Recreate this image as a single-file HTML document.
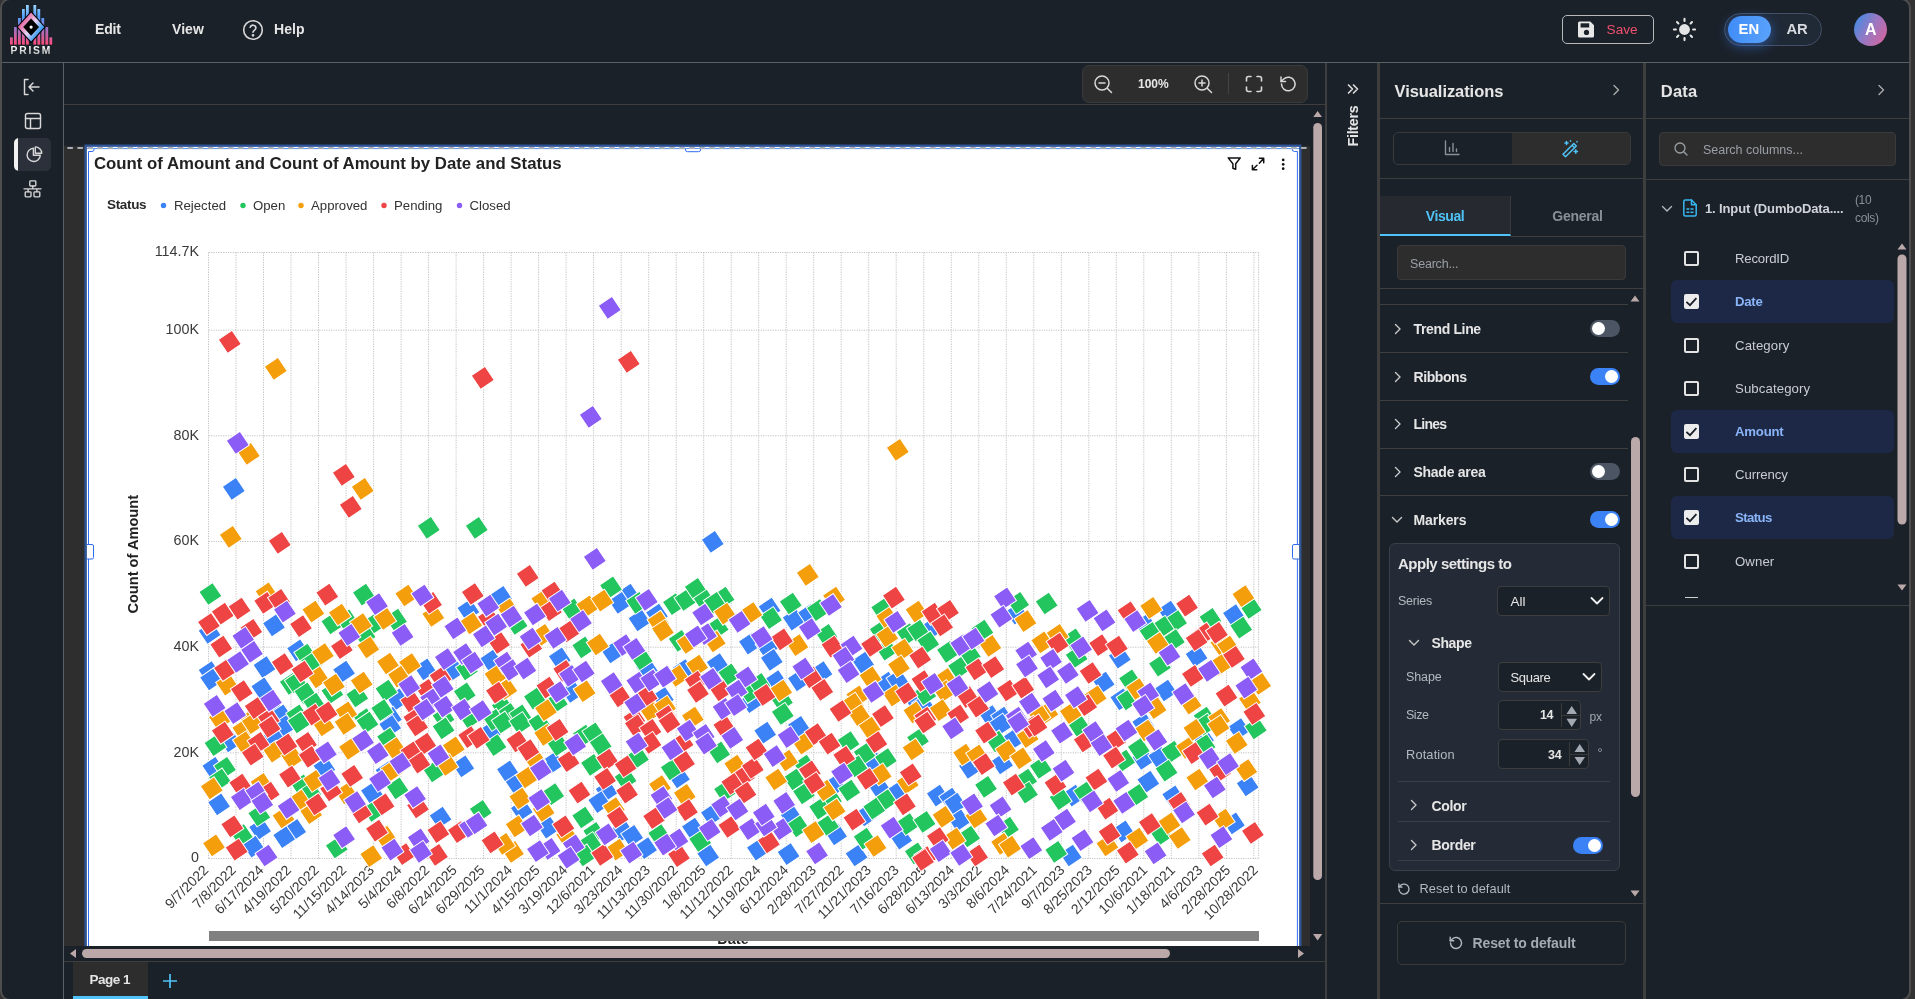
<!DOCTYPE html>
<html lang="en"><head><meta charset="utf-8"><title>PRISM</title>
<style>
*{box-sizing:border-box;margin:0;padding:0}
html,body{width:1915px;height:999px;overflow:hidden;background:#333;font-family:"Liberation Sans",sans-serif;color:#e6e6e6}
.a{position:absolute}
.win{position:absolute;left:0;top:-2px;width:1911px;height:1003px;background:#1b2129;border:2px solid #4e4e4e;border-radius:10px;overflow:hidden}
/* everything inside .root uses page coordinates */
.root{will-change:transform;position:absolute;left:-2px;top:0;width:1915px;height:999px}
.hl{position:absolute;height:1px;background:#3e3e3e}
.vl{position:absolute;width:1px;background:#3e3e3e}
.t{position:absolute;white-space:nowrap;line-height:1}
.b{font-weight:bold}
svg{position:absolute;overflow:visible}
.ic{fill:none;stroke:#d8d8d8;stroke-width:1.6;stroke-linecap:round;stroke-linejoin:round}
.tog{position:absolute;width:30px;height:17px;border-radius:9px;background:#4b5563}
.tog i{position:absolute;left:2px;top:2px;width:13px;height:13px;border-radius:50%;background:#fff}
.tog.on{background:#3b82f6}
.tog.on i{left:15px}
.cb{position:absolute;width:15px;height:15px;border:2px solid #e4e4e4;border-radius:2px}
.cb.on{background:#ececec;border-color:#ececec}
.sel{position:absolute;background:#1b2129;border:1px solid #3d3d3d;border-radius:4px}
.row{position:absolute;left:1671px;width:223px;height:43px;border-radius:6px;background:#1c2846}

</style></head>
<body>
<div class="win"><div class="root">

<!-- ============ top bar ============ -->
<div class="hl" style="left:0;top:62px;width:1915px;background:#5b5f66"></div>
<svg style="left:8px;top:3px" width="48" height="54" viewBox="8 3 48 54">
<defs>
<linearGradient id="lgb" x1="0" y1="5" x2="0" y2="45" gradientUnits="userSpaceOnUse"><stop offset="0" stop-color="#9ad4ff"/><stop offset=".3" stop-color="#4f9dff"/><stop offset=".6" stop-color="#a071c4"/><stop offset="1" stop-color="#ff4b78"/></linearGradient>
<linearGradient id="lgd" x1="18" y1="18" x2="44" y2="36" gradientUnits="userSpaceOnUse"><stop offset="0" stop-color="#e85c9a"/><stop offset=".22" stop-color="#e672ab"/><stop offset=".52" stop-color="#e6d6f6"/><stop offset=".78" stop-color="#4aa3f5"/><stop offset="1" stop-color="#3b9af3"/></linearGradient>
<linearGradient id="lgt" x1="0" y1="47" x2="0" y2="54" gradientUnits="userSpaceOnUse"><stop offset="0" stop-color="#fff"/><stop offset="1" stop-color="#bdbdbd"/></linearGradient>
</defs>
<g fill="url(#lgb)">
<rect x="10" y="37.3" width="2.8" height="7.3"/><rect x="14" y="27" width="2.8" height="17.6"/><rect x="18" y="18" width="2.8" height="26.6"/><rect x="22" y="9" width="2.8" height="35.6"/><rect x="26" y="5" width="2.8" height="39.6"/>
<rect x="33.4" y="5" width="2.8" height="39.6"/><rect x="37.4" y="9" width="2.8" height="35.6"/><rect x="41.4" y="18" width="2.8" height="26.6"/><rect x="45.4" y="27" width="2.8" height="17.6"/><rect x="49.4" y="37.3" width="2.8" height="7.3"/>
</g>
<path d="M31.1 11 L45.7 27.1 L31.1 43.2 L16.5 27.1 Z" fill="#000"/>
<path d="M31.1 12.6 L44.3 27.1 L31.1 41.6 L17.9 27.1 Z" fill="url(#lgd)"/>
<path d="M31.1 18.4 L39 27.1 L31.1 35.8 L23.2 27.1 Z" fill="#000"/>
<circle cx="31.1" cy="27.1" r="1.6" fill="#fff"/>
<text x="31.3" y="53.8" text-anchor="middle" font-family="Liberation Sans, sans-serif" font-size="10.3" font-weight="bold" letter-spacing="1.75" fill="url(#lgt)">PRISM</text>
</svg>
<div class="t b" style="left:95px;top:22px;font-size:14px;letter-spacing:-0.14px">Edit</div>
<div class="t b" style="left:172px;top:22px;font-size:14px;letter-spacing:0.06px">View</div>
<svg style="stroke-width:1.6;left:241px;top:18px" width="24" height="24" viewBox="0 0 24 24" class="ic"><circle cx="12" cy="12" r="9.3"/><path d="M9.2 9.3a2.9 2.9 0 0 1 5.7 .8c0 2-2.9 2.6-2.9 4.1"/><circle cx="12" cy="17.3" r=".6" fill="#d8d8d8"/></svg>
<div class="t b" style="left:274px;top:22px;font-size:14px;letter-spacing:0.06px">Help</div>

<!-- save -->
<div class="a" style="left:1562px;top:15px;width:92px;height:29px;border:1px solid #b9b9b9;border-radius:5px"></div>
<svg style="left:1577px;top:20px" width="19" height="19" viewBox="0 0 19 19"><path d="M2.5 1.5h10.8l3.7 3.7v10.8a1.5 1.5 0 0 1-1.500 1.500h-13a1.5 1.5 0 0 1-1.500-1.500v-13a1.500 1.500 0 0 1 1.500-1.500z" fill="#e8e8e8"/><rect x="3.6" y="3.300" width="8.6" height="4.200" fill="#1b2129"/><circle cx="9.500" cy="12.400" r="2.600" fill="#1b2129"/></svg>
<div class="t" style="left:1606.6px;top:23.3px;font-size:13.6px;color:#f0506e;letter-spacing:-0.02px">Save</div>
<!-- sun -->
<svg style="left:1672px;top:17px" width="25" height="25" viewBox="-12.500 -12.500 25 25"><circle r="5.400" fill="#e4e4e4"/><g stroke="#e4e4e4" stroke-width="2.100" stroke-linecap="round"><path d="M0-8.600V-10.600M0 8.600V10.600M-8.600 0H-10.600M8.600 0H10.600M-6.100-6.100L-7.500-7.500M6.100-6.100L7.500-7.500M-6.100 6.100L-7.500 7.500M6.100 6.100L7.500 7.500"/></g></svg>
<!-- language -->
<div class="a" style="left:1724px;top:13px;width:98px;height:33px;border:1px solid #435068;border-radius:17px;background:#202936"></div>
<div class="a" style="left:1728px;top:16px;width:43px;height:27px;border-radius:14px;background:linear-gradient(100deg,#3f8cf7,#5aa2fb);box-shadow:0 3px 12px 1px rgba(59,130,246,.45)"></div>
<div class="t b" style="left:1738.6px;top:21.700px;font-size:14.800px;color:#fff">EN</div>
<div class="t b" style="left:1786.4px;top:21.700px;font-size:14.800px;color:#d6d9de">AR</div>
<!-- avatar -->
<div class="a" style="left:1854px;top:13px;width:33px;height:33px;border-radius:50%;background:linear-gradient(120deg,#3d8be6 5%,#9a78c2 50%,#d8639c 95%)"></div>
<div class="t b" style="left:1865px;top:21.7px;font-size:16px;color:#fff;letter-spacing:-0.16px">A</div>

<!-- ============ left sidebar ============ -->
<div class="vl" style="left:63px;top:63px;height:936px;background:#5b5f66"></div>
<svg style="stroke-width:1.45;left:20px;top:75.3px" width="24" height="24" viewBox="0 0 24 24" class="ic"><path d="M8 4.500H4.500V19.500H8"/><path d="M19 12H9M13 8L9 12L13 16"/></svg>
<svg style="stroke-width:1.45;left:21px;top:109px" width="24" height="24" viewBox="0 0 24 24" class="ic"><rect x="4.500" y="4.500" width="15" height="15" rx="2"/><path d="M4.500 9.500H19.500M9.500 9.500V19.500"/></svg>
<div class="a" style="left:14px;top:138px;width:37px;height:33px;background:#2b303b;border-radius:5px;overflow:hidden"><div class="a" style="left:0;top:0;width:3.500px;height:33px;background:#f2f2f2"></div></div>
<svg style="stroke-width:1.4;left:22px;top:142px" width="24" height="24" viewBox="0 0 24 24" class="ic"><path d="M11.400 6.300A6.600 6.600 0 1 0 18.300 13.200H11.400Z"/><path d="M13.300 4.900V11.300H19.700A6.400 6.400 0 0 0 13.300 4.900Z"/></svg>
<svg style="stroke-width:1.35;left:20px;top:177px" width="24" height="24" viewBox="0 0 24 24" class="ic"><rect x="9.8" y="3.800" width="6" height="5.200" rx=".8"/><rect x="5.200" y="14.800" width="5.800" height="5" rx=".8"/><rect x="14" y="14.800" width="5.800" height="5" rx=".8"/><path d="M12.800 9V11.800M4 11.800H21M8.100 11.800V14.800M16.900 11.800V14.800"/></svg>

<!-- ============ canvas toolbar ============ -->
<div class="hl" style="left:64px;top:104px;width:1261px;background:#3f3e3d"></div>
<div class="a" style="left:1082px;top:65px;width:226px;height:38px;background:#2d2d2d;border:1px solid #3a3a3a;border-radius:7px"></div>
<svg style="stroke-width:1.500;left:1091px;top:71.5px" width="24" height="24" viewBox="0 0 24 24" class="ic"><circle cx="11" cy="11" r="7"/><path d="M16.200 16.200L20.500 20.500M8 11H14"/></svg>
<div class="t b" style="left:1138px;top:77.5px;font-size:12px;letter-spacing:-0.03px">100%</div>
<svg style="stroke-width:1.500;left:1191px;top:71.5px" width="24" height="24" viewBox="0 0 24 24" class="ic"><circle cx="11" cy="11" r="7"/><path d="M16.200 16.200L20.500 20.500M8 11H14M11 8V14"/></svg>
<div class="vl" style="left:1228px;top:73px;height:21px;background:#444"></div>
<svg style="stroke-width:1.600;left:1242px;top:71.5px" width="24" height="24" viewBox="0 0 24 24" class="ic"><path d="M4.500 9V6.500A2 2 0 0 1 6.500 4.500H9M15 4.500H17.500A2 2 0 0 1 19.500 6.500V9M19.500 15V17.500A2 2 0 0 1 17.500 19.500H15M9 19.500H6.500A2 2 0 0 1 4.500 17.500V15"/></svg>
<svg style="stroke-width:1.500;left:1276px;top:71.5px" width="24" height="24" viewBox="0 0 24 24" class="ic"><path d="M5.500 12A6.800 6.800 0 1 0 7.700 7L5 9.500"/><path d="M5 5V9.500H9.500"/></svg>

<!-- ============ canvas ============ -->
<div class="a" style="left:64px;top:146px;width:1246px;height:800px;background:#2e2e2e"></div>
<div class="a" style="left:1310px;top:105px;width:15px;height:841px;background:#1b2129"></div>
<svg class="a" style="left:0;top:0" width="1915" height="999" font-family="Liberation Sans, sans-serif">
<g>
<rect x="84.4" y="144.5" width="1217.1" height="801.5" fill="#2f5597"/>
<rect x="86.9" y="146.9" width="1212.2" height="799.1" fill="#fff"/>
<path d="M86.900 148.600H1299.100" stroke="#3b82f6" stroke-width="0.9" fill="none"/>
<path d="M67.400 148H1308" stroke="#a9adb6" stroke-width="2" stroke-dasharray="5.500 4.530" fill="none"/>
<g fill="none" stroke="#2f6df0" stroke-width="1">
<path d="M88.500 946V151.500H92Q94 151.500 94 149.600V149"/>
<path d="M1297.400 946V151.500H1294.500Q1292.300 151.500 1292.300 149.500V149"/>
<path d="M685.500 149V150Q685.500 151.700 687.500 151.700H698.500Q700.500 151.700 700.500 150V149" fill="#fff"/>
<path d="M87 544.500H92Q93.500 544.500 93.500 546V557.500Q93.500 559 92 559H87" fill="#fff"/>
<path d="M1299 544.500H1294Q1292.500 544.500 1292.500 546V557.500Q1292.500 559 1294 559H1299" fill="#fff"/>
</g>
</g>
<defs><clipPath id="cv"><rect x="87" y="147" width="1212" height="799"/></clipPath></defs>
<g clip-path="url(#cv)">
<g stroke="#c2c2c2" stroke-width="1" stroke-dasharray="1.2 1.2" fill="none"><line x1="208.5" y1="252.5" x2="208.5" y2="858.5"/><line x1="236.0" y1="252.5" x2="236.0" y2="858.5"/><line x1="263.5" y1="252.5" x2="263.5" y2="858.5"/><line x1="291.0" y1="252.5" x2="291.0" y2="858.5"/><line x1="318.5" y1="252.5" x2="318.5" y2="858.5"/><line x1="346.1" y1="252.5" x2="346.1" y2="858.5"/><line x1="373.6" y1="252.5" x2="373.6" y2="858.5"/><line x1="401.1" y1="252.5" x2="401.1" y2="858.5"/><line x1="428.6" y1="252.5" x2="428.6" y2="858.5"/><line x1="456.1" y1="252.5" x2="456.1" y2="858.5"/><line x1="483.6" y1="252.5" x2="483.6" y2="858.5"/><line x1="511.1" y1="252.5" x2="511.1" y2="858.5"/><line x1="538.6" y1="252.5" x2="538.6" y2="858.5"/><line x1="566.1" y1="252.5" x2="566.1" y2="858.5"/><line x1="593.6" y1="252.5" x2="593.6" y2="858.5"/><line x1="621.2" y1="252.5" x2="621.2" y2="858.5"/><line x1="648.7" y1="252.5" x2="648.7" y2="858.5"/><line x1="676.2" y1="252.5" x2="676.2" y2="858.5"/><line x1="703.7" y1="252.5" x2="703.7" y2="858.5"/><line x1="731.2" y1="252.5" x2="731.2" y2="858.5"/><line x1="758.7" y1="252.5" x2="758.7" y2="858.5"/><line x1="786.2" y1="252.5" x2="786.2" y2="858.5"/><line x1="813.7" y1="252.5" x2="813.7" y2="858.5"/><line x1="841.2" y1="252.5" x2="841.2" y2="858.5"/><line x1="868.7" y1="252.5" x2="868.7" y2="858.5"/><line x1="896.2" y1="252.5" x2="896.2" y2="858.5"/><line x1="923.8" y1="252.5" x2="923.8" y2="858.5"/><line x1="951.3" y1="252.5" x2="951.3" y2="858.5"/><line x1="978.8" y1="252.5" x2="978.8" y2="858.5"/><line x1="1006.3" y1="252.5" x2="1006.3" y2="858.5"/><line x1="1033.8" y1="252.5" x2="1033.8" y2="858.5"/><line x1="1061.3" y1="252.5" x2="1061.3" y2="858.5"/><line x1="1088.8" y1="252.5" x2="1088.8" y2="858.5"/><line x1="1116.3" y1="252.5" x2="1116.3" y2="858.5"/><line x1="1143.8" y1="252.5" x2="1143.8" y2="858.5"/><line x1="1171.3" y1="252.5" x2="1171.3" y2="858.5"/><line x1="1198.9" y1="252.5" x2="1198.9" y2="858.5"/><line x1="1226.4" y1="252.5" x2="1226.4" y2="858.5"/><line x1="1253.9" y1="252.5" x2="1253.9" y2="858.5"/><line x1="1258.6" y1="252.5" x2="1258.6" y2="858.5"/><line x1="208.7" y1="858.5" x2="1258.3" y2="858.5"/><line x1="208.7" y1="752.8" x2="1258.3" y2="752.8"/><line x1="208.7" y1="647.2" x2="1258.3" y2="647.2"/><line x1="208.7" y1="541.5" x2="1258.3" y2="541.5"/><line x1="208.7" y1="435.8" x2="1258.3" y2="435.8"/><line x1="208.7" y1="330.2" x2="1258.3" y2="330.2"/><line x1="208.7" y1="252.5" x2="1258.3" y2="252.5"/></g>
<g font-size="14.3" fill="#3a3a3a"><text x="199" y="862.4" text-anchor="end">0</text><text x="199" y="756.7" text-anchor="end">20K</text><text x="199" y="651.1" text-anchor="end">40K</text><text x="199" y="545.4" text-anchor="end">60K</text><text x="199" y="439.7" text-anchor="end">80K</text><text x="199" y="334.1" text-anchor="end">100K</text><text x="199" y="256.4" text-anchor="end">114.7K</text></g>
<g font-size="14" fill="#3a3a3a"><text transform="translate(209.2,871) rotate(-45)" text-anchor="end">9/7/2022</text><text transform="translate(236.8,871) rotate(-45)" text-anchor="end">7/8/2022</text><text transform="translate(264.4,871) rotate(-45)" text-anchor="end">6/17/2024</text><text transform="translate(292.1,871) rotate(-45)" text-anchor="end">4/19/2022</text><text transform="translate(319.7,871) rotate(-45)" text-anchor="end">5/20/2022</text><text transform="translate(347.3,871) rotate(-45)" text-anchor="end">11/15/2022</text><text transform="translate(374.9,871) rotate(-45)" text-anchor="end">4/14/2023</text><text transform="translate(402.5,871) rotate(-45)" text-anchor="end">5/4/2024</text><text transform="translate(430.2,871) rotate(-45)" text-anchor="end">6/8/2022</text><text transform="translate(457.8,871) rotate(-45)" text-anchor="end">6/24/2025</text><text transform="translate(485.4,871) rotate(-45)" text-anchor="end">6/29/2025</text><text transform="translate(513.0,871) rotate(-45)" text-anchor="end">11/1/2024</text><text transform="translate(540.7,871) rotate(-45)" text-anchor="end">4/15/2025</text><text transform="translate(568.3,871) rotate(-45)" text-anchor="end">3/19/2024</text><text transform="translate(595.9,871) rotate(-45)" text-anchor="end">12/6/2021</text><text transform="translate(623.5,871) rotate(-45)" text-anchor="end">3/23/2024</text><text transform="translate(651.1,871) rotate(-45)" text-anchor="end">11/13/2023</text><text transform="translate(678.8,871) rotate(-45)" text-anchor="end">11/30/2022</text><text transform="translate(706.4,871) rotate(-45)" text-anchor="end">1/8/2025</text><text transform="translate(734.0,871) rotate(-45)" text-anchor="end">11/12/2022</text><text transform="translate(761.6,871) rotate(-45)" text-anchor="end">11/19/2024</text><text transform="translate(789.2,871) rotate(-45)" text-anchor="end">6/12/2024</text><text transform="translate(816.9,871) rotate(-45)" text-anchor="end">2/28/2023</text><text transform="translate(844.5,871) rotate(-45)" text-anchor="end">7/27/2022</text><text transform="translate(872.1,871) rotate(-45)" text-anchor="end">11/21/2023</text><text transform="translate(899.7,871) rotate(-45)" text-anchor="end">7/16/2023</text><text transform="translate(927.3,871) rotate(-45)" text-anchor="end">6/28/2025</text><text transform="translate(955.0,871) rotate(-45)" text-anchor="end">6/13/2024</text><text transform="translate(982.6,871) rotate(-45)" text-anchor="end">3/3/2022</text><text transform="translate(1010.2,871) rotate(-45)" text-anchor="end">8/6/2024</text><text transform="translate(1037.8,871) rotate(-45)" text-anchor="end">7/24/2021</text><text transform="translate(1065.5,871) rotate(-45)" text-anchor="end">9/7/2023</text><text transform="translate(1093.1,871) rotate(-45)" text-anchor="end">8/25/2023</text><text transform="translate(1120.7,871) rotate(-45)" text-anchor="end">2/12/2025</text><text transform="translate(1148.3,871) rotate(-45)" text-anchor="end">10/6/2021</text><text transform="translate(1175.9,871) rotate(-45)" text-anchor="end">1/18/2021</text><text transform="translate(1203.6,871) rotate(-45)" text-anchor="end">4/6/2023</text><text transform="translate(1231.2,871) rotate(-45)" text-anchor="end">2/28/2025</text><text transform="translate(1258.8,871) rotate(-45)" text-anchor="end">10/28/2022</text></g>
<g stroke="#fff" stroke-width="1"><g fill="#3b82f6"><rect x="-8.3" y="-8.3" width="16.6" height="16.6" transform="translate(233.8,488.8) rotate(-34)"/><rect x="-8.3" y="-8.3" width="16.6" height="16.6" transform="translate(712.8,541.8) rotate(-34)"/><rect x="-8.3" y="-8.3" width="16.6" height="16.6" transform="translate(209.6,632.8) rotate(-34)"/><rect x="-8.3" y="-8.3" width="16.6" height="16.6" transform="translate(209.6,672.2) rotate(-34)"/><rect x="-8.3" y="-8.3" width="16.6" height="16.6" transform="translate(211.1,679.5) rotate(-34)"/><rect x="-8.3" y="-8.3" width="16.6" height="16.6" transform="translate(274.0,625.4) rotate(-34)"/><rect x="-8.3" y="-8.3" width="16.6" height="16.6" transform="translate(264.5,667.1) rotate(-34)"/><rect x="-8.3" y="-8.3" width="16.6" height="16.6" transform="translate(262.3,688.3) rotate(-34)"/><rect x="-8.3" y="-8.3" width="16.6" height="16.6" transform="translate(274.7,711.7) rotate(-34)"/><rect x="-8.3" y="-8.3" width="16.6" height="16.6" transform="translate(281.3,715.4) rotate(-34)"/><rect x="-8.3" y="-8.3" width="16.6" height="16.6" transform="translate(298.1,650.3) rotate(-34)"/><rect x="-8.3" y="-8.3" width="16.6" height="16.6" transform="translate(344.1,671.5) rotate(-34)"/><rect x="-8.3" y="-8.3" width="16.6" height="16.6" transform="translate(468.4,610.1) rotate(-34)"/><rect x="-8.3" y="-8.3" width="16.6" height="16.6" transform="translate(425.3,669.3) rotate(-34)"/><rect x="-8.3" y="-8.3" width="16.6" height="16.6" transform="translate(453.8,670.0) rotate(-34)"/><rect x="-8.3" y="-8.3" width="16.6" height="16.6" transform="translate(397.5,699.3) rotate(-34)"/><rect x="-8.3" y="-8.3" width="16.6" height="16.6" transform="translate(390.9,717.6) rotate(-34)"/><rect x="-8.3" y="-8.3" width="16.6" height="16.6" transform="translate(501.3,596.9) rotate(-34)"/><rect x="-8.3" y="-8.3" width="16.6" height="16.6" transform="translate(628.5,594.7) rotate(-34)"/><rect x="-8.3" y="-8.3" width="16.6" height="16.6" transform="translate(619.8,602.8) rotate(-34)"/><rect x="-8.3" y="-8.3" width="16.6" height="16.6" transform="translate(639.5,620.3) rotate(-34)"/><rect x="-8.3" y="-8.3" width="16.6" height="16.6" transform="translate(657.0,614.5) rotate(-34)"/><rect x="-8.3" y="-8.3" width="16.6" height="16.6" transform="translate(749.9,643.7) rotate(-34)"/><rect x="-8.3" y="-8.3" width="16.6" height="16.6" transform="translate(612.4,652.5) rotate(-34)"/><rect x="-8.3" y="-8.3" width="16.6" height="16.6" transform="translate(559.8,658.3) rotate(-34)"/><rect x="-8.3" y="-8.3" width="16.6" height="16.6" transform="translate(491.1,660.5) rotate(-34)"/><rect x="-8.3" y="-8.3" width="16.6" height="16.6" transform="translate(572.2,692.0) rotate(-34)"/><rect x="-8.3" y="-8.3" width="16.6" height="16.6" transform="translate(646.8,668.6) rotate(-34)"/><rect x="-8.3" y="-8.3" width="16.6" height="16.6" transform="translate(683.4,670.0) rotate(-34)"/><rect x="-8.3" y="-8.3" width="16.6" height="16.6" transform="translate(717.7,664.2) rotate(-34)"/><rect x="-8.3" y="-8.3" width="16.6" height="16.6" transform="translate(751.3,702.2) rotate(-34)"/><rect x="-8.3" y="-8.3" width="16.6" height="16.6" transform="translate(662.9,697.8) rotate(-34)"/><rect x="-8.3" y="-8.3" width="16.6" height="16.6" transform="translate(769.6,608.6) rotate(-34)"/><rect x="-8.3" y="-8.3" width="16.6" height="16.6" transform="translate(766.7,646.6) rotate(-34)"/><rect x="-8.3" y="-8.3" width="16.6" height="16.6" transform="translate(771.8,659.8) rotate(-34)"/><rect x="-8.3" y="-8.3" width="16.6" height="16.6" transform="translate(793.7,619.6) rotate(-34)"/><rect x="-8.3" y="-8.3" width="16.6" height="16.6" transform="translate(809.1,614.5) rotate(-34)"/><rect x="-8.3" y="-8.3" width="16.6" height="16.6" transform="translate(863.2,662.7) rotate(-34)"/><rect x="-8.3" y="-8.3" width="16.6" height="16.6" transform="translate(821.5,672.2) rotate(-34)"/><rect x="-8.3" y="-8.3" width="16.6" height="16.6" transform="translate(798.9,680.3) rotate(-34)"/><rect x="-8.3" y="-8.3" width="16.6" height="16.6" transform="translate(776.2,681.0) rotate(-34)"/><rect x="-8.3" y="-8.3" width="16.6" height="16.6" transform="translate(886.6,682.5) rotate(-34)"/><rect x="-8.3" y="-8.3" width="16.6" height="16.6" transform="translate(897.6,680.3) rotate(-34)"/><rect x="-8.3" y="-8.3" width="16.6" height="16.6" transform="translate(931.9,628.4) rotate(-34)"/><rect x="-8.3" y="-8.3" width="16.6" height="16.6" transform="translate(1016.7,613.7) rotate(-34)"/><rect x="-8.3" y="-8.3" width="16.6" height="16.6" transform="translate(915.1,700.0) rotate(-34)"/><rect x="-8.3" y="-8.3" width="16.6" height="16.6" transform="translate(923.1,705.1) rotate(-34)"/><rect x="-8.3" y="-8.3" width="16.6" height="16.6" transform="translate(990.4,716.1) rotate(-34)"/><rect x="-8.3" y="-8.3" width="16.6" height="16.6" transform="translate(1002.1,717.6) rotate(-34)"/><rect x="-8.3" y="-8.3" width="16.6" height="16.6" transform="translate(1145.4,624.7) rotate(-34)"/><rect x="-8.3" y="-8.3" width="16.6" height="16.6" transform="translate(1168.8,611.6) rotate(-34)"/><rect x="-8.3" y="-8.3" width="16.6" height="16.6" transform="translate(1196.6,656.1) rotate(-34)"/><rect x="-8.3" y="-8.3" width="16.6" height="16.6" transform="translate(1233.9,615.2) rotate(-34)"/><rect x="-8.3" y="-8.3" width="16.6" height="16.6" transform="translate(1119.8,657.6) rotate(-34)"/><rect x="-8.3" y="-8.3" width="16.6" height="16.6" transform="translate(1103.7,682.5) rotate(-34)"/><rect x="-8.3" y="-8.3" width="16.6" height="16.6" transform="translate(1121.3,699.3) rotate(-34)"/><rect x="-8.3" y="-8.3" width="16.6" height="16.6" transform="translate(1165.9,690.5) rotate(-34)"/><rect x="-8.3" y="-8.3" width="16.6" height="16.6" transform="translate(230.1,741.5) rotate(-34)"/><rect x="-8.3" y="-8.3" width="16.6" height="16.6" transform="translate(284.2,726.1) rotate(-34)"/><rect x="-8.3" y="-8.3" width="16.6" height="16.6" transform="translate(274.0,737.8) rotate(-34)"/><rect x="-8.3" y="-8.3" width="16.6" height="16.6" transform="translate(324.4,767.8) rotate(-34)"/><rect x="-8.3" y="-8.3" width="16.6" height="16.6" transform="translate(390.2,726.1) rotate(-34)"/><rect x="-8.3" y="-8.3" width="16.6" height="16.6" transform="translate(463.3,766.3) rotate(-34)"/><rect x="-8.3" y="-8.3" width="16.6" height="16.6" transform="translate(386.5,772.2) rotate(-34)"/><rect x="-8.3" y="-8.3" width="16.6" height="16.6" transform="translate(371.9,792.6) rotate(-34)"/><rect x="-8.3" y="-8.3" width="16.6" height="16.6" transform="translate(213.3,767.8) rotate(-34)"/><rect x="-8.3" y="-8.3" width="16.6" height="16.6" transform="translate(219.1,804.3) rotate(-34)"/><rect x="-8.3" y="-8.3" width="16.6" height="16.6" transform="translate(295.2,829.9) rotate(-34)"/><rect x="-8.3" y="-8.3" width="16.6" height="16.6" transform="translate(284.2,837.2) rotate(-34)"/><rect x="-8.3" y="-8.3" width="16.6" height="16.6" transform="translate(260.1,829.2) rotate(-34)"/><rect x="-8.3" y="-8.3" width="16.6" height="16.6" transform="translate(253.5,846.7) rotate(-34)"/><rect x="-8.3" y="-8.3" width="16.6" height="16.6" transform="translate(440.6,817.5) rotate(-34)"/><rect x="-8.3" y="-8.3" width="16.6" height="16.6" transform="translate(492.5,730.5) rotate(-34)"/><rect x="-8.3" y="-8.3" width="16.6" height="16.6" transform="translate(507.9,771.4) rotate(-34)"/><rect x="-8.3" y="-8.3" width="16.6" height="16.6" transform="translate(516.7,783.9) rotate(-34)"/><rect x="-8.3" y="-8.3" width="16.6" height="16.6" transform="translate(553.2,762.7) rotate(-34)"/><rect x="-8.3" y="-8.3" width="16.6" height="16.6" transform="translate(606.6,791.2) rotate(-34)"/><rect x="-8.3" y="-8.3" width="16.6" height="16.6" transform="translate(599.3,802.1) rotate(-34)"/><rect x="-8.3" y="-8.3" width="16.6" height="16.6" transform="translate(521.8,810.2) rotate(-34)"/><rect x="-8.3" y="-8.3" width="16.6" height="16.6" transform="translate(548.1,827.7) rotate(-34)"/><rect x="-8.3" y="-8.3" width="16.6" height="16.6" transform="translate(622.7,830.7) rotate(-34)"/><rect x="-8.3" y="-8.3" width="16.6" height="16.6" transform="translate(632.2,835.8) rotate(-34)"/><rect x="-8.3" y="-8.3" width="16.6" height="16.6" transform="translate(646.1,848.2) rotate(-34)"/><rect x="-8.3" y="-8.3" width="16.6" height="16.6" transform="translate(679.0,777.3) rotate(-34)"/><rect x="-8.3" y="-8.3" width="16.6" height="16.6" transform="translate(711.9,814.6) rotate(-34)"/><rect x="-8.3" y="-8.3" width="16.6" height="16.6" transform="translate(692.9,828.5) rotate(-34)"/><rect x="-8.3" y="-8.3" width="16.6" height="16.6" transform="translate(708.2,855.5) rotate(-34)"/><rect x="-8.3" y="-8.3" width="16.6" height="16.6" transform="translate(765.2,732.7) rotate(-34)"/><rect x="-8.3" y="-8.3" width="16.6" height="16.6" transform="translate(798.9,726.8) rotate(-34)"/><rect x="-8.3" y="-8.3" width="16.6" height="16.6" transform="translate(874.9,763.4) rotate(-34)"/><rect x="-8.3" y="-8.3" width="16.6" height="16.6" transform="translate(834.7,785.3) rotate(-34)"/><rect x="-8.3" y="-8.3" width="16.6" height="16.6" transform="translate(880.7,789.7) rotate(-34)"/><rect x="-8.3" y="-8.3" width="16.6" height="16.6" transform="translate(896.8,792.6) rotate(-34)"/><rect x="-8.3" y="-8.3" width="16.6" height="16.6" transform="translate(866.1,815.3) rotate(-34)"/><rect x="-8.3" y="-8.3" width="16.6" height="16.6" transform="translate(836.1,834.3) rotate(-34)"/><rect x="-8.3" y="-8.3" width="16.6" height="16.6" transform="translate(791.6,816.8) rotate(-34)"/><rect x="-8.3" y="-8.3" width="16.6" height="16.6" transform="translate(757.9,849.7) rotate(-34)"/><rect x="-8.3" y="-8.3" width="16.6" height="16.6" transform="translate(788.6,854.1) rotate(-34)"/><rect x="-8.3" y="-8.3" width="16.6" height="16.6" transform="translate(856.6,855.5) rotate(-34)"/><rect x="-8.3" y="-8.3" width="16.6" height="16.6" transform="translate(901.2,838.7) rotate(-34)"/><rect x="-8.3" y="-8.3" width="16.6" height="16.6" transform="translate(1000.6,724.7) rotate(-34)"/><rect x="-8.3" y="-8.3" width="16.6" height="16.6" transform="translate(1014.5,738.5) rotate(-34)"/><rect x="-8.3" y="-8.3" width="16.6" height="16.6" transform="translate(969.9,767.8) rotate(-34)"/><rect x="-8.3" y="-8.3" width="16.6" height="16.6" transform="translate(1002.1,763.4) rotate(-34)"/><rect x="-8.3" y="-8.3" width="16.6" height="16.6" transform="translate(937.8,795.6) rotate(-34)"/><rect x="-8.3" y="-8.3" width="16.6" height="16.6" transform="translate(950.2,798.5) rotate(-34)"/><rect x="-8.3" y="-8.3" width="16.6" height="16.6" transform="translate(955.3,803.6) rotate(-34)"/><rect x="-8.3" y="-8.3" width="16.6" height="16.6" transform="translate(959.0,820.4) rotate(-34)"/><rect x="-8.3" y="-8.3" width="16.6" height="16.6" transform="translate(1143.2,723.9) rotate(-34)"/><rect x="-8.3" y="-8.3" width="16.6" height="16.6" transform="translate(1143.2,759.0) rotate(-34)"/><rect x="-8.3" y="-8.3" width="16.6" height="16.6" transform="translate(1159.3,757.6) rotate(-34)"/><rect x="-8.3" y="-8.3" width="16.6" height="16.6" transform="translate(1203.1,738.5) rotate(-34)"/><rect x="-8.3" y="-8.3" width="16.6" height="16.6" transform="translate(1239.0,729.0) rotate(-34)"/><rect x="-8.3" y="-8.3" width="16.6" height="16.6" transform="translate(1247.7,785.3) rotate(-34)"/><rect x="-8.3" y="-8.3" width="16.6" height="16.6" transform="translate(1073.7,795.6) rotate(-34)"/><rect x="-8.3" y="-8.3" width="16.6" height="16.6" transform="translate(1148.3,781.7) rotate(-34)"/><rect x="-8.3" y="-8.3" width="16.6" height="16.6" transform="translate(1173.2,796.3) rotate(-34)"/><rect x="-8.3" y="-8.3" width="16.6" height="16.6" transform="translate(1233.9,823.3) rotate(-34)"/><rect x="-8.3" y="-8.3" width="16.6" height="16.6" transform="translate(1123.5,831.4) rotate(-34)"/><rect x="-8.3" y="-8.3" width="16.6" height="16.6" transform="translate(1070.8,855.5) rotate(-34)"/></g><g fill="#22c55e"><rect x="-8.3" y="-8.3" width="16.6" height="16.6" transform="translate(428.8,527.8) rotate(-34)"/><rect x="-8.3" y="-8.3" width="16.6" height="16.6" transform="translate(476.8,527.8) rotate(-34)"/><rect x="-8.3" y="-8.3" width="16.6" height="16.6" transform="translate(210.4,594.0) rotate(-34)"/><rect x="-8.3" y="-8.3" width="16.6" height="16.6" transform="translate(305.4,654.7) rotate(-34)"/><rect x="-8.3" y="-8.3" width="16.6" height="16.6" transform="translate(312.0,662.7) rotate(-34)"/><rect x="-8.3" y="-8.3" width="16.6" height="16.6" transform="translate(290.8,683.9) rotate(-34)"/><rect x="-8.3" y="-8.3" width="16.6" height="16.6" transform="translate(295.9,682.5) rotate(-34)"/><rect x="-8.3" y="-8.3" width="16.6" height="16.6" transform="translate(305.4,693.4) rotate(-34)"/><rect x="-8.3" y="-8.3" width="16.6" height="16.6" transform="translate(314.2,703.7) rotate(-34)"/><rect x="-8.3" y="-8.3" width="16.6" height="16.6" transform="translate(332.4,692.7) rotate(-34)"/><rect x="-8.3" y="-8.3" width="16.6" height="16.6" transform="translate(297.3,715.4) rotate(-34)"/><rect x="-8.3" y="-8.3" width="16.6" height="16.6" transform="translate(332.4,623.3) rotate(-34)"/><rect x="-8.3" y="-8.3" width="16.6" height="16.6" transform="translate(347.1,620.3) rotate(-34)"/><rect x="-8.3" y="-8.3" width="16.6" height="16.6" transform="translate(372.7,624.7) rotate(-34)"/><rect x="-8.3" y="-8.3" width="16.6" height="16.6" transform="translate(364.6,634.9) rotate(-34)"/><rect x="-8.3" y="-8.3" width="16.6" height="16.6" transform="translate(357.3,696.4) rotate(-34)"/><rect x="-8.3" y="-8.3" width="16.6" height="16.6" transform="translate(364.6,719.0) rotate(-34)"/><rect x="-8.3" y="-8.3" width="16.6" height="16.6" transform="translate(363.9,594.7) rotate(-34)"/><rect x="-8.3" y="-8.3" width="16.6" height="16.6" transform="translate(396.0,619.6) rotate(-34)"/><rect x="-8.3" y="-8.3" width="16.6" height="16.6" transform="translate(467.0,669.3) rotate(-34)"/><rect x="-8.3" y="-8.3" width="16.6" height="16.6" transform="translate(386.5,690.5) rotate(-34)"/><rect x="-8.3" y="-8.3" width="16.6" height="16.6" transform="translate(464.8,693.4) rotate(-34)"/><rect x="-8.3" y="-8.3" width="16.6" height="16.6" transform="translate(382.2,710.2) rotate(-34)"/><rect x="-8.3" y="-8.3" width="16.6" height="16.6" transform="translate(443.6,717.6) rotate(-34)"/><rect x="-8.3" y="-8.3" width="16.6" height="16.6" transform="translate(469.9,717.6) rotate(-34)"/><rect x="-8.3" y="-8.3" width="16.6" height="16.6" transform="translate(516.7,624.0) rotate(-34)"/><rect x="-8.3" y="-8.3" width="16.6" height="16.6" transform="translate(572.2,609.4) rotate(-34)"/><rect x="-8.3" y="-8.3" width="16.6" height="16.6" transform="translate(611.0,587.4) rotate(-34)"/><rect x="-8.3" y="-8.3" width="16.6" height="16.6" transform="translate(637.3,602.8) rotate(-34)"/><rect x="-8.3" y="-8.3" width="16.6" height="16.6" transform="translate(673.9,604.2) rotate(-34)"/><rect x="-8.3" y="-8.3" width="16.6" height="16.6" transform="translate(685.5,599.9) rotate(-34)"/><rect x="-8.3" y="-8.3" width="16.6" height="16.6" transform="translate(695.8,588.9) rotate(-34)"/><rect x="-8.3" y="-8.3" width="16.6" height="16.6" transform="translate(704.6,600.6) rotate(-34)"/><rect x="-8.3" y="-8.3" width="16.6" height="16.6" transform="translate(723.6,597.7) rotate(-34)"/><rect x="-8.3" y="-8.3" width="16.6" height="16.6" transform="translate(714.8,602.8) rotate(-34)"/><rect x="-8.3" y="-8.3" width="16.6" height="16.6" transform="translate(717.7,627.6) rotate(-34)"/><rect x="-8.3" y="-8.3" width="16.6" height="16.6" transform="translate(679.7,640.8) rotate(-34)"/><rect x="-8.3" y="-8.3" width="16.6" height="16.6" transform="translate(583.2,647.4) rotate(-34)"/><rect x="-8.3" y="-8.3" width="16.6" height="16.6" transform="translate(641.7,659.1) rotate(-34)"/><rect x="-8.3" y="-8.3" width="16.6" height="16.6" transform="translate(534.9,698.6) rotate(-34)"/><rect x="-8.3" y="-8.3" width="16.6" height="16.6" transform="translate(556.9,702.2) rotate(-34)"/><rect x="-8.3" y="-8.3" width="16.6" height="16.6" transform="translate(502.8,707.3) rotate(-34)"/><rect x="-8.3" y="-8.3" width="16.6" height="16.6" transform="translate(508.6,713.9) rotate(-34)"/><rect x="-8.3" y="-8.3" width="16.6" height="16.6" transform="translate(520.3,715.4) rotate(-34)"/><rect x="-8.3" y="-8.3" width="16.6" height="16.6" transform="translate(494.0,719.8) rotate(-34)"/><rect x="-8.3" y="-8.3" width="16.6" height="16.6" transform="translate(729.4,674.4) rotate(-34)"/><rect x="-8.3" y="-8.3" width="16.6" height="16.6" transform="translate(749.9,692.0) rotate(-34)"/><rect x="-8.3" y="-8.3" width="16.6" height="16.6" transform="translate(771.1,618.1) rotate(-34)"/><rect x="-8.3" y="-8.3" width="16.6" height="16.6" transform="translate(790.8,603.5) rotate(-34)"/><rect x="-8.3" y="-8.3" width="16.6" height="16.6" transform="translate(817.9,610.1) rotate(-34)"/><rect x="-8.3" y="-8.3" width="16.6" height="16.6" transform="translate(826.6,634.9) rotate(-34)"/><rect x="-8.3" y="-8.3" width="16.6" height="16.6" transform="translate(759.4,683.9) rotate(-34)"/><rect x="-8.3" y="-8.3" width="16.6" height="16.6" transform="translate(782.0,700.7) rotate(-34)"/><rect x="-8.3" y="-8.3" width="16.6" height="16.6" transform="translate(782.8,713.9) rotate(-34)"/><rect x="-8.3" y="-8.3" width="16.6" height="16.6" transform="translate(882.2,609.4) rotate(-34)"/><rect x="-8.3" y="-8.3" width="16.6" height="16.6" transform="translate(880.7,631.3) rotate(-34)"/><rect x="-8.3" y="-8.3" width="16.6" height="16.6" transform="translate(886.6,649.6) rotate(-34)"/><rect x="-8.3" y="-8.3" width="16.6" height="16.6" transform="translate(907.8,634.2) rotate(-34)"/><rect x="-8.3" y="-8.3" width="16.6" height="16.6" transform="translate(918.0,630.6) rotate(-34)"/><rect x="-8.3" y="-8.3" width="16.6" height="16.6" transform="translate(928.3,642.3) rotate(-34)"/><rect x="-8.3" y="-8.3" width="16.6" height="16.6" transform="translate(948.0,651.8) rotate(-34)"/><rect x="-8.3" y="-8.3" width="16.6" height="16.6" transform="translate(982.4,630.6) rotate(-34)"/><rect x="-8.3" y="-8.3" width="16.6" height="16.6" transform="translate(969.9,654.7) rotate(-34)"/><rect x="-8.3" y="-8.3" width="16.6" height="16.6" transform="translate(959.0,667.8) rotate(-34)"/><rect x="-8.3" y="-8.3" width="16.6" height="16.6" transform="translate(1018.2,602.8) rotate(-34)"/><rect x="-8.3" y="-8.3" width="16.6" height="16.6" transform="translate(925.3,694.2) rotate(-34)"/><rect x="-8.3" y="-8.3" width="16.6" height="16.6" transform="translate(1046.7,603.5) rotate(-34)"/><rect x="-8.3" y="-8.3" width="16.6" height="16.6" transform="translate(1176.1,621.1) rotate(-34)"/><rect x="-8.3" y="-8.3" width="16.6" height="16.6" transform="translate(1162.9,626.9) rotate(-34)"/><rect x="-8.3" y="-8.3" width="16.6" height="16.6" transform="translate(1150.5,632.8) rotate(-34)"/><rect x="-8.3" y="-8.3" width="16.6" height="16.6" transform="translate(1173.9,640.1) rotate(-34)"/><rect x="-8.3" y="-8.3" width="16.6" height="16.6" transform="translate(1160.0,665.7) rotate(-34)"/><rect x="-8.3" y="-8.3" width="16.6" height="16.6" transform="translate(1210.5,618.9) rotate(-34)"/><rect x="-8.3" y="-8.3" width="16.6" height="16.6" transform="translate(1250.7,607.9) rotate(-34)"/><rect x="-8.3" y="-8.3" width="16.6" height="16.6" transform="translate(1241.2,627.6) rotate(-34)"/><rect x="-8.3" y="-8.3" width="16.6" height="16.6" transform="translate(1073.7,639.3) rotate(-34)"/><rect x="-8.3" y="-8.3" width="16.6" height="16.6" transform="translate(1076.7,656.9) rotate(-34)"/><rect x="-8.3" y="-8.3" width="16.6" height="16.6" transform="translate(1130.0,680.3) rotate(-34)"/><rect x="-8.3" y="-8.3" width="16.6" height="16.6" transform="translate(1127.8,699.3) rotate(-34)"/><rect x="-8.3" y="-8.3" width="16.6" height="16.6" transform="translate(1204.6,717.6) rotate(-34)"/><rect x="-8.3" y="-8.3" width="16.6" height="16.6" transform="translate(215.5,745.1) rotate(-34)"/><rect x="-8.3" y="-8.3" width="16.6" height="16.6" transform="translate(298.8,722.5) rotate(-34)"/><rect x="-8.3" y="-8.3" width="16.6" height="16.6" transform="translate(367.5,722.5) rotate(-34)"/><rect x="-8.3" y="-8.3" width="16.6" height="16.6" transform="translate(443.6,728.3) rotate(-34)"/><rect x="-8.3" y="-8.3" width="16.6" height="16.6" transform="translate(434.1,771.4) rotate(-34)"/><rect x="-8.3" y="-8.3" width="16.6" height="16.6" transform="translate(388.0,738.5) rotate(-34)"/><rect x="-8.3" y="-8.3" width="16.6" height="16.6" transform="translate(397.5,788.3) rotate(-34)"/><rect x="-8.3" y="-8.3" width="16.6" height="16.6" transform="translate(373.4,810.9) rotate(-34)"/><rect x="-8.3" y="-8.3" width="16.6" height="16.6" transform="translate(225.0,767.8) rotate(-34)"/><rect x="-8.3" y="-8.3" width="16.6" height="16.6" transform="translate(219.9,779.5) rotate(-34)"/><rect x="-8.3" y="-8.3" width="16.6" height="16.6" transform="translate(259.3,815.3) rotate(-34)"/><rect x="-8.3" y="-8.3" width="16.6" height="16.6" transform="translate(301.7,785.3) rotate(-34)"/><rect x="-8.3" y="-8.3" width="16.6" height="16.6" transform="translate(310.5,792.6) rotate(-34)"/><rect x="-8.3" y="-8.3" width="16.6" height="16.6" transform="translate(241.8,835.0) rotate(-34)"/><rect x="-8.3" y="-8.3" width="16.6" height="16.6" transform="translate(336.8,847.5) rotate(-34)"/><rect x="-8.3" y="-8.3" width="16.6" height="16.6" transform="translate(495.5,745.1) rotate(-34)"/><rect x="-8.3" y="-8.3" width="16.6" height="16.6" transform="translate(480.8,810.9) rotate(-34)"/><rect x="-8.3" y="-8.3" width="16.6" height="16.6" transform="translate(502.8,722.5) rotate(-34)"/><rect x="-8.3" y="-8.3" width="16.6" height="16.6" transform="translate(520.3,723.2) rotate(-34)"/><rect x="-8.3" y="-8.3" width="16.6" height="16.6" transform="translate(539.3,723.2) rotate(-34)"/><rect x="-8.3" y="-8.3" width="16.6" height="16.6" transform="translate(558.3,745.1) rotate(-34)"/><rect x="-8.3" y="-8.3" width="16.6" height="16.6" transform="translate(583.9,735.6) rotate(-34)"/><rect x="-8.3" y="-8.3" width="16.6" height="16.6" transform="translate(593.4,733.4) rotate(-34)"/><rect x="-8.3" y="-8.3" width="16.6" height="16.6" transform="translate(600.7,744.4) rotate(-34)"/><rect x="-8.3" y="-8.3" width="16.6" height="16.6" transform="translate(592.0,764.9) rotate(-34)"/><rect x="-8.3" y="-8.3" width="16.6" height="16.6" transform="translate(638.0,757.6) rotate(-34)"/><rect x="-8.3" y="-8.3" width="16.6" height="16.6" transform="translate(625.6,778.8) rotate(-34)"/><rect x="-8.3" y="-8.3" width="16.6" height="16.6" transform="translate(553.2,794.1) rotate(-34)"/><rect x="-8.3" y="-8.3" width="16.6" height="16.6" transform="translate(583.2,817.5) rotate(-34)"/><rect x="-8.3" y="-8.3" width="16.6" height="16.6" transform="translate(594.2,832.9) rotate(-34)"/><rect x="-8.3" y="-8.3" width="16.6" height="16.6" transform="translate(590.5,843.1) rotate(-34)"/><rect x="-8.3" y="-8.3" width="16.6" height="16.6" transform="translate(584.7,855.5) rotate(-34)"/><rect x="-8.3" y="-8.3" width="16.6" height="16.6" transform="translate(719.2,752.4) rotate(-34)"/><rect x="-8.3" y="-8.3" width="16.6" height="16.6" transform="translate(671.7,769.3) rotate(-34)"/><rect x="-8.3" y="-8.3" width="16.6" height="16.6" transform="translate(725.0,791.2) rotate(-34)"/><rect x="-8.3" y="-8.3" width="16.6" height="16.6" transform="translate(659.2,835.0) rotate(-34)"/><rect x="-8.3" y="-8.3" width="16.6" height="16.6" transform="translate(700.2,840.9) rotate(-34)"/><rect x="-8.3" y="-8.3" width="16.6" height="16.6" transform="translate(804.7,765.6) rotate(-34)"/><rect x="-8.3" y="-8.3" width="16.6" height="16.6" transform="translate(794.5,779.5) rotate(-34)"/><rect x="-8.3" y="-8.3" width="16.6" height="16.6" transform="translate(804.0,793.4) rotate(-34)"/><rect x="-8.3" y="-8.3" width="16.6" height="16.6" transform="translate(831.0,799.2) rotate(-34)"/><rect x="-8.3" y="-8.3" width="16.6" height="16.6" transform="translate(848.6,742.2) rotate(-34)"/><rect x="-8.3" y="-8.3" width="16.6" height="16.6" transform="translate(864.7,753.9) rotate(-34)"/><rect x="-8.3" y="-8.3" width="16.6" height="16.6" transform="translate(885.9,759.0) rotate(-34)"/><rect x="-8.3" y="-8.3" width="16.6" height="16.6" transform="translate(856.6,766.3) rotate(-34)"/><rect x="-8.3" y="-8.3" width="16.6" height="16.6" transform="translate(849.3,790.5) rotate(-34)"/><rect x="-8.3" y="-8.3" width="16.6" height="16.6" transform="translate(885.9,800.0) rotate(-34)"/><rect x="-8.3" y="-8.3" width="16.6" height="16.6" transform="translate(874.2,808.7) rotate(-34)"/><rect x="-8.3" y="-8.3" width="16.6" height="16.6" transform="translate(820.1,808.7) rotate(-34)"/><rect x="-8.3" y="-8.3" width="16.6" height="16.6" transform="translate(828.1,824.8) rotate(-34)"/><rect x="-8.3" y="-8.3" width="16.6" height="16.6" transform="translate(798.1,826.3) rotate(-34)"/><rect x="-8.3" y="-8.3" width="16.6" height="16.6" transform="translate(864.7,838.7) rotate(-34)"/><rect x="-8.3" y="-8.3" width="16.6" height="16.6" transform="translate(907.8,824.1) rotate(-34)"/><rect x="-8.3" y="-8.3" width="16.6" height="16.6" transform="translate(924.6,821.9) rotate(-34)"/><rect x="-8.3" y="-8.3" width="16.6" height="16.6" transform="translate(918.0,739.3) rotate(-34)"/><rect x="-8.3" y="-8.3" width="16.6" height="16.6" transform="translate(997.0,741.5) rotate(-34)"/><rect x="-8.3" y="-8.3" width="16.6" height="16.6" transform="translate(986.0,786.8) rotate(-34)"/><rect x="-8.3" y="-8.3" width="16.6" height="16.6" transform="translate(1026.2,779.5) rotate(-34)"/><rect x="-8.3" y="-8.3" width="16.6" height="16.6" transform="translate(1027.0,792.6) rotate(-34)"/><rect x="-8.3" y="-8.3" width="16.6" height="16.6" transform="translate(1008.0,827.7) rotate(-34)"/><rect x="-8.3" y="-8.3" width="16.6" height="16.6" transform="translate(969.2,836.5) rotate(-34)"/><rect x="-8.3" y="-8.3" width="16.6" height="16.6" transform="translate(915.8,853.3) rotate(-34)"/><rect x="-8.3" y="-8.3" width="16.6" height="16.6" transform="translate(1079.6,726.8) rotate(-34)"/><rect x="-8.3" y="-8.3" width="16.6" height="16.6" transform="translate(1138.8,748.8) rotate(-34)"/><rect x="-8.3" y="-8.3" width="16.6" height="16.6" transform="translate(1124.2,760.5) rotate(-34)"/><rect x="-8.3" y="-8.3" width="16.6" height="16.6" transform="translate(1172.4,751.7) rotate(-34)"/><rect x="-8.3" y="-8.3" width="16.6" height="16.6" transform="translate(1166.6,770.7) rotate(-34)"/><rect x="-8.3" y="-8.3" width="16.6" height="16.6" transform="translate(1204.6,745.1) rotate(-34)"/><rect x="-8.3" y="-8.3" width="16.6" height="16.6" transform="translate(1205.3,724.7) rotate(-34)"/><rect x="-8.3" y="-8.3" width="16.6" height="16.6" transform="translate(1255.8,728.3) rotate(-34)"/><rect x="-8.3" y="-8.3" width="16.6" height="16.6" transform="translate(1040.8,767.8) rotate(-34)"/><rect x="-8.3" y="-8.3" width="16.6" height="16.6" transform="translate(1060.6,799.2) rotate(-34)"/><rect x="-8.3" y="-8.3" width="16.6" height="16.6" transform="translate(1084.7,792.6) rotate(-34)"/><rect x="-8.3" y="-8.3" width="16.6" height="16.6" transform="translate(1137.3,794.8) rotate(-34)"/><rect x="-8.3" y="-8.3" width="16.6" height="16.6" transform="translate(1161.5,834.3) rotate(-34)"/><rect x="-8.3" y="-8.3" width="16.6" height="16.6" transform="translate(1056.2,851.9) rotate(-34)"/></g><g fill="#f59e0b"><rect x="-8.3" y="-8.3" width="16.6" height="16.6" transform="translate(275.8,368.8) rotate(-34)"/><rect x="-8.3" y="-8.3" width="16.6" height="16.6" transform="translate(248.8,453.8) rotate(-34)"/><rect x="-8.3" y="-8.3" width="16.6" height="16.6" transform="translate(897.8,449.8) rotate(-34)"/><rect x="-8.3" y="-8.3" width="16.6" height="16.6" transform="translate(362.8,488.8) rotate(-34)"/><rect x="-8.3" y="-8.3" width="16.6" height="16.6" transform="translate(230.8,536.8) rotate(-34)"/><rect x="-8.3" y="-8.3" width="16.6" height="16.6" transform="translate(807.8,574.8) rotate(-34)"/><rect x="-8.3" y="-8.3" width="16.6" height="16.6" transform="translate(227.2,684.7) rotate(-34)"/><rect x="-8.3" y="-8.3" width="16.6" height="16.6" transform="translate(219.9,719.0) rotate(-34)"/><rect x="-8.3" y="-8.3" width="16.6" height="16.6" transform="translate(266.6,593.3) rotate(-34)"/><rect x="-8.3" y="-8.3" width="16.6" height="16.6" transform="translate(250.6,719.8) rotate(-34)"/><rect x="-8.3" y="-8.3" width="16.6" height="16.6" transform="translate(313.4,611.6) rotate(-34)"/><rect x="-8.3" y="-8.3" width="16.6" height="16.6" transform="translate(317.8,677.3) rotate(-34)"/><rect x="-8.3" y="-8.3" width="16.6" height="16.6" transform="translate(333.9,684.7) rotate(-34)"/><rect x="-8.3" y="-8.3" width="16.6" height="16.6" transform="translate(322.9,654.0) rotate(-34)"/><rect x="-8.3" y="-8.3" width="16.6" height="16.6" transform="translate(339.8,614.5) rotate(-34)"/><rect x="-8.3" y="-8.3" width="16.6" height="16.6" transform="translate(361.0,624.0) rotate(-34)"/><rect x="-8.3" y="-8.3" width="16.6" height="16.6" transform="translate(368.3,647.4) rotate(-34)"/><rect x="-8.3" y="-8.3" width="16.6" height="16.6" transform="translate(361.7,682.5) rotate(-34)"/><rect x="-8.3" y="-8.3" width="16.6" height="16.6" transform="translate(346.3,712.4) rotate(-34)"/><rect x="-8.3" y="-8.3" width="16.6" height="16.6" transform="translate(385.1,618.9) rotate(-34)"/><rect x="-8.3" y="-8.3" width="16.6" height="16.6" transform="translate(406.3,595.5) rotate(-34)"/><rect x="-8.3" y="-8.3" width="16.6" height="16.6" transform="translate(433.3,615.9) rotate(-34)"/><rect x="-8.3" y="-8.3" width="16.6" height="16.6" transform="translate(471.3,623.3) rotate(-34)"/><rect x="-8.3" y="-8.3" width="16.6" height="16.6" transform="translate(388.0,663.5) rotate(-34)"/><rect x="-8.3" y="-8.3" width="16.6" height="16.6" transform="translate(409.9,664.2) rotate(-34)"/><rect x="-8.3" y="-8.3" width="16.6" height="16.6" transform="translate(399.0,676.6) rotate(-34)"/><rect x="-8.3" y="-8.3" width="16.6" height="16.6" transform="translate(507.9,609.4) rotate(-34)"/><rect x="-8.3" y="-8.3" width="16.6" height="16.6" transform="translate(542.3,600.6) rotate(-34)"/><rect x="-8.3" y="-8.3" width="16.6" height="16.6" transform="translate(587.6,606.4) rotate(-34)"/><rect x="-8.3" y="-8.3" width="16.6" height="16.6" transform="translate(602.2,600.6) rotate(-34)"/><rect x="-8.3" y="-8.3" width="16.6" height="16.6" transform="translate(543.0,634.9) rotate(-34)"/><rect x="-8.3" y="-8.3" width="16.6" height="16.6" transform="translate(658.5,621.8) rotate(-34)"/><rect x="-8.3" y="-8.3" width="16.6" height="16.6" transform="translate(662.9,630.6) rotate(-34)"/><rect x="-8.3" y="-8.3" width="16.6" height="16.6" transform="translate(725.0,613.7) rotate(-34)"/><rect x="-8.3" y="-8.3" width="16.6" height="16.6" transform="translate(751.3,613.0) rotate(-34)"/><rect x="-8.3" y="-8.3" width="16.6" height="16.6" transform="translate(687.7,643.0) rotate(-34)"/><rect x="-8.3" y="-8.3" width="16.6" height="16.6" transform="translate(714.8,641.5) rotate(-34)"/><rect x="-8.3" y="-8.3" width="16.6" height="16.6" transform="translate(597.8,644.5) rotate(-34)"/><rect x="-8.3" y="-8.3" width="16.6" height="16.6" transform="translate(495.5,675.9) rotate(-34)"/><rect x="-8.3" y="-8.3" width="16.6" height="16.6" transform="translate(506.4,689.0) rotate(-34)"/><rect x="-8.3" y="-8.3" width="16.6" height="16.6" transform="translate(584.7,691.2) rotate(-34)"/><rect x="-8.3" y="-8.3" width="16.6" height="16.6" transform="translate(545.9,710.2) rotate(-34)"/><rect x="-8.3" y="-8.3" width="16.6" height="16.6" transform="translate(677.5,675.9) rotate(-34)"/><rect x="-8.3" y="-8.3" width="16.6" height="16.6" transform="translate(697.2,665.7) rotate(-34)"/><rect x="-8.3" y="-8.3" width="16.6" height="16.6" transform="translate(650.5,711.0) rotate(-34)"/><rect x="-8.3" y="-8.3" width="16.6" height="16.6" transform="translate(665.1,706.6) rotate(-34)"/><rect x="-8.3" y="-8.3" width="16.6" height="16.6" transform="translate(692.9,717.6) rotate(-34)"/><rect x="-8.3" y="-8.3" width="16.6" height="16.6" transform="translate(834.0,597.7) rotate(-34)"/><rect x="-8.3" y="-8.3" width="16.6" height="16.6" transform="translate(797.4,645.2) rotate(-34)"/><rect x="-8.3" y="-8.3" width="16.6" height="16.6" transform="translate(781.3,690.5) rotate(-34)"/><rect x="-8.3" y="-8.3" width="16.6" height="16.6" transform="translate(857.3,696.4) rotate(-34)"/><rect x="-8.3" y="-8.3" width="16.6" height="16.6" transform="translate(853.0,703.7) rotate(-34)"/><rect x="-8.3" y="-8.3" width="16.6" height="16.6" transform="translate(859.5,715.4) rotate(-34)"/><rect x="-8.3" y="-8.3" width="16.6" height="16.6" transform="translate(870.5,677.3) rotate(-34)"/><rect x="-8.3" y="-8.3" width="16.6" height="16.6" transform="translate(887.3,618.1) rotate(-34)"/><rect x="-8.3" y="-8.3" width="16.6" height="16.6" transform="translate(916.6,611.6) rotate(-34)"/><rect x="-8.3" y="-8.3" width="16.6" height="16.6" transform="translate(887.3,636.4) rotate(-34)"/><rect x="-8.3" y="-8.3" width="16.6" height="16.6" transform="translate(902.7,649.6) rotate(-34)"/><rect x="-8.3" y="-8.3" width="16.6" height="16.6" transform="translate(990.4,645.9) rotate(-34)"/><rect x="-8.3" y="-8.3" width="16.6" height="16.6" transform="translate(899.0,666.4) rotate(-34)"/><rect x="-8.3" y="-8.3" width="16.6" height="16.6" transform="translate(1025.5,621.1) rotate(-34)"/><rect x="-8.3" y="-8.3" width="16.6" height="16.6" transform="translate(945.8,678.8) rotate(-34)"/><rect x="-8.3" y="-8.3" width="16.6" height="16.6" transform="translate(944.3,691.2) rotate(-34)"/><rect x="-8.3" y="-8.3" width="16.6" height="16.6" transform="translate(893.9,695.6) rotate(-34)"/><rect x="-8.3" y="-8.3" width="16.6" height="16.6" transform="translate(914.4,712.4) rotate(-34)"/><rect x="-8.3" y="-8.3" width="16.6" height="16.6" transform="translate(940.7,710.2) rotate(-34)"/><rect x="-8.3" y="-8.3" width="16.6" height="16.6" transform="translate(1151.2,607.9) rotate(-34)"/><rect x="-8.3" y="-8.3" width="16.6" height="16.6" transform="translate(1157.8,643.0) rotate(-34)"/><rect x="-8.3" y="-8.3" width="16.6" height="16.6" transform="translate(1221.4,644.5) rotate(-34)"/><rect x="-8.3" y="-8.3" width="16.6" height="16.6" transform="translate(1228.0,646.6) rotate(-34)"/><rect x="-8.3" y="-8.3" width="16.6" height="16.6" transform="translate(1220.0,664.9) rotate(-34)"/><rect x="-8.3" y="-8.3" width="16.6" height="16.6" transform="translate(1260.2,683.9) rotate(-34)"/><rect x="-8.3" y="-8.3" width="16.6" height="16.6" transform="translate(1249.9,700.7) rotate(-34)"/><rect x="-8.3" y="-8.3" width="16.6" height="16.6" transform="translate(1243.4,596.2) rotate(-34)"/><rect x="-8.3" y="-8.3" width="16.6" height="16.6" transform="translate(1042.3,642.3) rotate(-34)"/><rect x="-8.3" y="-8.3" width="16.6" height="16.6" transform="translate(1057.7,634.9) rotate(-34)"/><rect x="-8.3" y="-8.3" width="16.6" height="16.6" transform="translate(1095.7,696.4) rotate(-34)"/><rect x="-8.3" y="-8.3" width="16.6" height="16.6" transform="translate(1070.8,713.2) rotate(-34)"/><rect x="-8.3" y="-8.3" width="16.6" height="16.6" transform="translate(1047.4,712.4) rotate(-34)"/><rect x="-8.3" y="-8.3" width="16.6" height="16.6" transform="translate(1039.4,715.4) rotate(-34)"/><rect x="-8.3" y="-8.3" width="16.6" height="16.6" transform="translate(1137.3,689.0) rotate(-34)"/><rect x="-8.3" y="-8.3" width="16.6" height="16.6" transform="translate(1155.6,708.1) rotate(-34)"/><rect x="-8.3" y="-8.3" width="16.6" height="16.6" transform="translate(1190.7,703.7) rotate(-34)"/><rect x="-8.3" y="-8.3" width="16.6" height="16.6" transform="translate(1219.2,719.0) rotate(-34)"/><rect x="-8.3" y="-8.3" width="16.6" height="16.6" transform="translate(243.3,729.8) rotate(-34)"/><rect x="-8.3" y="-8.3" width="16.6" height="16.6" transform="translate(252.8,723.2) rotate(-34)"/><rect x="-8.3" y="-8.3" width="16.6" height="16.6" transform="translate(244.0,742.2) rotate(-34)"/><rect x="-8.3" y="-8.3" width="16.6" height="16.6" transform="translate(274.0,751.7) rotate(-34)"/><rect x="-8.3" y="-8.3" width="16.6" height="16.6" transform="translate(292.2,757.6) rotate(-34)"/><rect x="-8.3" y="-8.3" width="16.6" height="16.6" transform="translate(323.7,725.4) rotate(-34)"/><rect x="-8.3" y="-8.3" width="16.6" height="16.6" transform="translate(345.6,723.9) rotate(-34)"/><rect x="-8.3" y="-8.3" width="16.6" height="16.6" transform="translate(453.8,747.3) rotate(-34)"/><rect x="-8.3" y="-8.3" width="16.6" height="16.6" transform="translate(447.2,764.9) rotate(-34)"/><rect x="-8.3" y="-8.3" width="16.6" height="16.6" transform="translate(394.6,748.0) rotate(-34)"/><rect x="-8.3" y="-8.3" width="16.6" height="16.6" transform="translate(350.0,748.8) rotate(-34)"/><rect x="-8.3" y="-8.3" width="16.6" height="16.6" transform="translate(391.7,770.7) rotate(-34)"/><rect x="-8.3" y="-8.3" width="16.6" height="16.6" transform="translate(346.3,793.4) rotate(-34)"/><rect x="-8.3" y="-8.3" width="16.6" height="16.6" transform="translate(211.8,788.3) rotate(-34)"/><rect x="-8.3" y="-8.3" width="16.6" height="16.6" transform="translate(261.5,783.9) rotate(-34)"/><rect x="-8.3" y="-8.3" width="16.6" height="16.6" transform="translate(314.2,780.9) rotate(-34)"/><rect x="-8.3" y="-8.3" width="16.6" height="16.6" transform="translate(299.5,800.7) rotate(-34)"/><rect x="-8.3" y="-8.3" width="16.6" height="16.6" transform="translate(311.2,813.1) rotate(-34)"/><rect x="-8.3" y="-8.3" width="16.6" height="16.6" transform="translate(283.5,817.5) rotate(-34)"/><rect x="-8.3" y="-8.3" width="16.6" height="16.6" transform="translate(214.0,845.3) rotate(-34)"/><rect x="-8.3" y="-8.3" width="16.6" height="16.6" transform="translate(385.1,836.5) rotate(-34)"/><rect x="-8.3" y="-8.3" width="16.6" height="16.6" transform="translate(371.2,856.2) rotate(-34)"/><rect x="-8.3" y="-8.3" width="16.6" height="16.6" transform="translate(545.2,734.9) rotate(-34)"/><rect x="-8.3" y="-8.3" width="16.6" height="16.6" transform="translate(526.9,777.3) rotate(-34)"/><rect x="-8.3" y="-8.3" width="16.6" height="16.6" transform="translate(534.9,759.7) rotate(-34)"/><rect x="-8.3" y="-8.3" width="16.6" height="16.6" transform="translate(520.3,798.5) rotate(-34)"/><rect x="-8.3" y="-8.3" width="16.6" height="16.6" transform="translate(543.7,810.9) rotate(-34)"/><rect x="-8.3" y="-8.3" width="16.6" height="16.6" transform="translate(516.7,826.3) rotate(-34)"/><rect x="-8.3" y="-8.3" width="16.6" height="16.6" transform="translate(567.1,836.5) rotate(-34)"/><rect x="-8.3" y="-8.3" width="16.6" height="16.6" transform="translate(513.0,851.9) rotate(-34)"/><rect x="-8.3" y="-8.3" width="16.6" height="16.6" transform="translate(504.2,843.8) rotate(-34)"/><rect x="-8.3" y="-8.3" width="16.6" height="16.6" transform="translate(613.9,808.0) rotate(-34)"/><rect x="-8.3" y="-8.3" width="16.6" height="16.6" transform="translate(617.6,849.7) rotate(-34)"/><rect x="-8.3" y="-8.3" width="16.6" height="16.6" transform="translate(660.0,786.1) rotate(-34)"/><rect x="-8.3" y="-8.3" width="16.6" height="16.6" transform="translate(684.8,794.8) rotate(-34)"/><rect x="-8.3" y="-8.3" width="16.6" height="16.6" transform="translate(735.3,765.6) rotate(-34)"/><rect x="-8.3" y="-8.3" width="16.6" height="16.6" transform="translate(803.3,743.7) rotate(-34)"/><rect x="-8.3" y="-8.3" width="16.6" height="16.6" transform="translate(787.2,760.5) rotate(-34)"/><rect x="-8.3" y="-8.3" width="16.6" height="16.6" transform="translate(776.2,779.5) rotate(-34)"/><rect x="-8.3" y="-8.3" width="16.6" height="16.6" transform="translate(825.2,790.5) rotate(-34)"/><rect x="-8.3" y="-8.3" width="16.6" height="16.6" transform="translate(869.8,727.6) rotate(-34)"/><rect x="-8.3" y="-8.3" width="16.6" height="16.6" transform="translate(880.7,774.4) rotate(-34)"/><rect x="-8.3" y="-8.3" width="16.6" height="16.6" transform="translate(834.7,809.5) rotate(-34)"/><rect x="-8.3" y="-8.3" width="16.6" height="16.6" transform="translate(813.5,832.1) rotate(-34)"/><rect x="-8.3" y="-8.3" width="16.6" height="16.6" transform="translate(875.6,846.0) rotate(-34)"/><rect x="-8.3" y="-8.3" width="16.6" height="16.6" transform="translate(913.6,749.5) rotate(-34)"/><rect x="-8.3" y="-8.3" width="16.6" height="16.6" transform="translate(907.8,783.1) rotate(-34)"/><rect x="-8.3" y="-8.3" width="16.6" height="16.6" transform="translate(1027.7,737.1) rotate(-34)"/><rect x="-8.3" y="-8.3" width="16.6" height="16.6" transform="translate(1006.5,751.0) rotate(-34)"/><rect x="-8.3" y="-8.3" width="16.6" height="16.6" transform="translate(1021.1,758.3) rotate(-34)"/><rect x="-8.3" y="-8.3" width="16.6" height="16.6" transform="translate(964.1,754.6) rotate(-34)"/><rect x="-8.3" y="-8.3" width="16.6" height="16.6" transform="translate(977.2,755.4) rotate(-34)"/><rect x="-8.3" y="-8.3" width="16.6" height="16.6" transform="translate(943.6,816.8) rotate(-34)"/><rect x="-8.3" y="-8.3" width="16.6" height="16.6" transform="translate(976.5,817.5) rotate(-34)"/><rect x="-8.3" y="-8.3" width="16.6" height="16.6" transform="translate(954.6,838.7) rotate(-34)"/><rect x="-8.3" y="-8.3" width="16.6" height="16.6" transform="translate(1002.1,843.8) rotate(-34)"/><rect x="-8.3" y="-8.3" width="16.6" height="16.6" transform="translate(1010.1,846.7) rotate(-34)"/><rect x="-8.3" y="-8.3" width="16.6" height="16.6" transform="translate(1146.1,730.5) rotate(-34)"/><rect x="-8.3" y="-8.3" width="16.6" height="16.6" transform="translate(1187.1,748.0) rotate(-34)"/><rect x="-8.3" y="-8.3" width="16.6" height="16.6" transform="translate(1194.4,729.8) rotate(-34)"/><rect x="-8.3" y="-8.3" width="16.6" height="16.6" transform="translate(1218.5,726.1) rotate(-34)"/><rect x="-8.3" y="-8.3" width="16.6" height="16.6" transform="translate(1236.8,742.9) rotate(-34)"/><rect x="-8.3" y="-8.3" width="16.6" height="16.6" transform="translate(1246.3,770.0) rotate(-34)"/><rect x="-8.3" y="-8.3" width="16.6" height="16.6" transform="translate(1197.3,779.5) rotate(-34)"/><rect x="-8.3" y="-8.3" width="16.6" height="16.6" transform="translate(1223.6,819.7) rotate(-34)"/><rect x="-8.3" y="-8.3" width="16.6" height="16.6" transform="translate(1169.5,823.3) rotate(-34)"/><rect x="-8.3" y="-8.3" width="16.6" height="16.6" transform="translate(1179.8,838.0) rotate(-34)"/><rect x="-8.3" y="-8.3" width="16.6" height="16.6" transform="translate(1137.3,838.7) rotate(-34)"/><rect x="-8.3" y="-8.3" width="16.6" height="16.6" transform="translate(1107.4,845.3) rotate(-34)"/></g><g fill="#ef4444"><rect x="-8.3" y="-8.3" width="16.6" height="16.6" transform="translate(229.8,341.8) rotate(-34)"/><rect x="-8.3" y="-8.3" width="16.6" height="16.6" transform="translate(628.8,361.8) rotate(-34)"/><rect x="-8.3" y="-8.3" width="16.6" height="16.6" transform="translate(482.8,377.8) rotate(-34)"/><rect x="-8.3" y="-8.3" width="16.6" height="16.6" transform="translate(343.8,474.8) rotate(-34)"/><rect x="-8.3" y="-8.3" width="16.6" height="16.6" transform="translate(350.8,506.8) rotate(-34)"/><rect x="-8.3" y="-8.3" width="16.6" height="16.6" transform="translate(279.8,542.8) rotate(-34)"/><rect x="-8.3" y="-8.3" width="16.6" height="16.6" transform="translate(527.8,575.8) rotate(-34)"/><rect x="-8.3" y="-8.3" width="16.6" height="16.6" transform="translate(222.8,613.7) rotate(-34)"/><rect x="-8.3" y="-8.3" width="16.6" height="16.6" transform="translate(239.6,608.6) rotate(-34)"/><rect x="-8.3" y="-8.3" width="16.6" height="16.6" transform="translate(208.9,624.0) rotate(-34)"/><rect x="-8.3" y="-8.3" width="16.6" height="16.6" transform="translate(251.3,629.8) rotate(-34)"/><rect x="-8.3" y="-8.3" width="16.6" height="16.6" transform="translate(221.3,646.6) rotate(-34)"/><rect x="-8.3" y="-8.3" width="16.6" height="16.6" transform="translate(225.0,670.0) rotate(-34)"/><rect x="-8.3" y="-8.3" width="16.6" height="16.6" transform="translate(241.8,691.2) rotate(-34)"/><rect x="-8.3" y="-8.3" width="16.6" height="16.6" transform="translate(265.2,602.8) rotate(-34)"/><rect x="-8.3" y="-8.3" width="16.6" height="16.6" transform="translate(279.1,599.9) rotate(-34)"/><rect x="-8.3" y="-8.3" width="16.6" height="16.6" transform="translate(255.7,708.1) rotate(-34)"/><rect x="-8.3" y="-8.3" width="16.6" height="16.6" transform="translate(268.8,719.0) rotate(-34)"/><rect x="-8.3" y="-8.3" width="16.6" height="16.6" transform="translate(327.3,594.7) rotate(-34)"/><rect x="-8.3" y="-8.3" width="16.6" height="16.6" transform="translate(301.0,626.2) rotate(-34)"/><rect x="-8.3" y="-8.3" width="16.6" height="16.6" transform="translate(282.7,664.2) rotate(-34)"/><rect x="-8.3" y="-8.3" width="16.6" height="16.6" transform="translate(302.5,671.5) rotate(-34)"/><rect x="-8.3" y="-8.3" width="16.6" height="16.6" transform="translate(313.4,714.6) rotate(-34)"/><rect x="-8.3" y="-8.3" width="16.6" height="16.6" transform="translate(326.6,712.4) rotate(-34)"/><rect x="-8.3" y="-8.3" width="16.6" height="16.6" transform="translate(341.9,648.1) rotate(-34)"/><rect x="-8.3" y="-8.3" width="16.6" height="16.6" transform="translate(431.1,602.8) rotate(-34)"/><rect x="-8.3" y="-8.3" width="16.6" height="16.6" transform="translate(472.8,594.0) rotate(-34)"/><rect x="-8.3" y="-8.3" width="16.6" height="16.6" transform="translate(440.6,677.3) rotate(-34)"/><rect x="-8.3" y="-8.3" width="16.6" height="16.6" transform="translate(426.7,689.8) rotate(-34)"/><rect x="-8.3" y="-8.3" width="16.6" height="16.6" transform="translate(411.4,702.2) rotate(-34)"/><rect x="-8.3" y="-8.3" width="16.6" height="16.6" transform="translate(414.3,719.0) rotate(-34)"/><rect x="-8.3" y="-8.3" width="16.6" height="16.6" transform="translate(488.9,618.9) rotate(-34)"/><rect x="-8.3" y="-8.3" width="16.6" height="16.6" transform="translate(499.1,643.0) rotate(-34)"/><rect x="-8.3" y="-8.3" width="16.6" height="16.6" transform="translate(552.5,592.5) rotate(-34)"/><rect x="-8.3" y="-8.3" width="16.6" height="16.6" transform="translate(551.0,610.1) rotate(-34)"/><rect x="-8.3" y="-8.3" width="16.6" height="16.6" transform="translate(568.6,631.3) rotate(-34)"/><rect x="-8.3" y="-8.3" width="16.6" height="16.6" transform="translate(531.3,646.6) rotate(-34)"/><rect x="-8.3" y="-8.3" width="16.6" height="16.6" transform="translate(496.9,692.7) rotate(-34)"/><rect x="-8.3" y="-8.3" width="16.6" height="16.6" transform="translate(564.2,670.8) rotate(-34)"/><rect x="-8.3" y="-8.3" width="16.6" height="16.6" transform="translate(547.4,687.6) rotate(-34)"/><rect x="-8.3" y="-8.3" width="16.6" height="16.6" transform="translate(695.8,681.7) rotate(-34)"/><rect x="-8.3" y="-8.3" width="16.6" height="16.6" transform="translate(698.0,692.0) rotate(-34)"/><rect x="-8.3" y="-8.3" width="16.6" height="16.6" transform="translate(720.6,690.5) rotate(-34)"/><rect x="-8.3" y="-8.3" width="16.6" height="16.6" transform="translate(619.8,696.4) rotate(-34)"/><rect x="-8.3" y="-8.3" width="16.6" height="16.6" transform="translate(646.8,696.4) rotate(-34)"/><rect x="-8.3" y="-8.3" width="16.6" height="16.6" transform="translate(666.5,716.1) rotate(-34)"/><rect x="-8.3" y="-8.3" width="16.6" height="16.6" transform="translate(634.4,719.0) rotate(-34)"/><rect x="-8.3" y="-8.3" width="16.6" height="16.6" transform="translate(782.0,639.3) rotate(-34)"/><rect x="-8.3" y="-8.3" width="16.6" height="16.6" transform="translate(832.5,646.6) rotate(-34)"/><rect x="-8.3" y="-8.3" width="16.6" height="16.6" transform="translate(811.3,677.3) rotate(-34)"/><rect x="-8.3" y="-8.3" width="16.6" height="16.6" transform="translate(822.3,689.8) rotate(-34)"/><rect x="-8.3" y="-8.3" width="16.6" height="16.6" transform="translate(764.5,694.9) rotate(-34)"/><rect x="-8.3" y="-8.3" width="16.6" height="16.6" transform="translate(840.5,711.0) rotate(-34)"/><rect x="-8.3" y="-8.3" width="16.6" height="16.6" transform="translate(882.9,716.1) rotate(-34)"/><rect x="-8.3" y="-8.3" width="16.6" height="16.6" transform="translate(872.0,645.9) rotate(-34)"/><rect x="-8.3" y="-8.3" width="16.6" height="16.6" transform="translate(893.9,597.7) rotate(-34)"/><rect x="-8.3" y="-8.3" width="16.6" height="16.6" transform="translate(932.7,613.7) rotate(-34)"/><rect x="-8.3" y="-8.3" width="16.6" height="16.6" transform="translate(948.0,610.8) rotate(-34)"/><rect x="-8.3" y="-8.3" width="16.6" height="16.6" transform="translate(942.2,625.4) rotate(-34)"/><rect x="-8.3" y="-8.3" width="16.6" height="16.6" transform="translate(920.2,657.6) rotate(-34)"/><rect x="-8.3" y="-8.3" width="16.6" height="16.6" transform="translate(976.5,669.3) rotate(-34)"/><rect x="-8.3" y="-8.3" width="16.6" height="16.6" transform="translate(993.3,667.1) rotate(-34)"/><rect x="-8.3" y="-8.3" width="16.6" height="16.6" transform="translate(922.4,681.0) rotate(-34)"/><rect x="-8.3" y="-8.3" width="16.6" height="16.6" transform="translate(906.3,693.4) rotate(-34)"/><rect x="-8.3" y="-8.3" width="16.6" height="16.6" transform="translate(925.3,717.6) rotate(-34)"/><rect x="-8.3" y="-8.3" width="16.6" height="16.6" transform="translate(958.2,715.4) rotate(-34)"/><rect x="-8.3" y="-8.3" width="16.6" height="16.6" transform="translate(967.7,697.1) rotate(-34)"/><rect x="-8.3" y="-8.3" width="16.6" height="16.6" transform="translate(978.0,706.6) rotate(-34)"/><rect x="-8.3" y="-8.3" width="16.6" height="16.6" transform="translate(1008.0,690.5) rotate(-34)"/><rect x="-8.3" y="-8.3" width="16.6" height="16.6" transform="translate(1023.3,687.6) rotate(-34)"/><rect x="-8.3" y="-8.3" width="16.6" height="16.6" transform="translate(1128.6,612.3) rotate(-34)"/><rect x="-8.3" y="-8.3" width="16.6" height="16.6" transform="translate(1187.1,605.7) rotate(-34)"/><rect x="-8.3" y="-8.3" width="16.6" height="16.6" transform="translate(1204.6,633.5) rotate(-34)"/><rect x="-8.3" y="-8.3" width="16.6" height="16.6" transform="translate(1217.0,632.8) rotate(-34)"/><rect x="-8.3" y="-8.3" width="16.6" height="16.6" transform="translate(1196.6,640.1) rotate(-34)"/><rect x="-8.3" y="-8.3" width="16.6" height="16.6" transform="translate(1233.9,656.9) rotate(-34)"/><rect x="-8.3" y="-8.3" width="16.6" height="16.6" transform="translate(1192.9,675.9) rotate(-34)"/><rect x="-8.3" y="-8.3" width="16.6" height="16.6" transform="translate(1226.5,695.6) rotate(-34)"/><rect x="-8.3" y="-8.3" width="16.6" height="16.6" transform="translate(1254.3,713.9) rotate(-34)"/><rect x="-8.3" y="-8.3" width="16.6" height="16.6" transform="translate(1057.7,643.7) rotate(-34)"/><rect x="-8.3" y="-8.3" width="16.6" height="16.6" transform="translate(1100.1,645.2) rotate(-34)"/><rect x="-8.3" y="-8.3" width="16.6" height="16.6" transform="translate(1116.9,646.6) rotate(-34)"/><rect x="-8.3" y="-8.3" width="16.6" height="16.6" transform="translate(1090.6,673.0) rotate(-34)"/><rect x="-8.3" y="-8.3" width="16.6" height="16.6" transform="translate(1086.2,705.1) rotate(-34)"/><rect x="-8.3" y="-8.3" width="16.6" height="16.6" transform="translate(222.8,732.7) rotate(-34)"/><rect x="-8.3" y="-8.3" width="16.6" height="16.6" transform="translate(269.6,726.8) rotate(-34)"/><rect x="-8.3" y="-8.3" width="16.6" height="16.6" transform="translate(258.6,742.9) rotate(-34)"/><rect x="-8.3" y="-8.3" width="16.6" height="16.6" transform="translate(252.8,754.6) rotate(-34)"/><rect x="-8.3" y="-8.3" width="16.6" height="16.6" transform="translate(286.4,744.4) rotate(-34)"/><rect x="-8.3" y="-8.3" width="16.6" height="16.6" transform="translate(306.1,742.9) rotate(-34)"/><rect x="-8.3" y="-8.3" width="16.6" height="16.6" transform="translate(309.8,756.8) rotate(-34)"/><rect x="-8.3" y="-8.3" width="16.6" height="16.6" transform="translate(417.2,725.4) rotate(-34)"/><rect x="-8.3" y="-8.3" width="16.6" height="16.6" transform="translate(469.2,737.1) rotate(-34)"/><rect x="-8.3" y="-8.3" width="16.6" height="16.6" transform="translate(425.3,743.7) rotate(-34)"/><rect x="-8.3" y="-8.3" width="16.6" height="16.6" transform="translate(411.4,752.4) rotate(-34)"/><rect x="-8.3" y="-8.3" width="16.6" height="16.6" transform="translate(419.4,762.7) rotate(-34)"/><rect x="-8.3" y="-8.3" width="16.6" height="16.6" transform="translate(352.2,775.8) rotate(-34)"/><rect x="-8.3" y="-8.3" width="16.6" height="16.6" transform="translate(418.0,807.3) rotate(-34)"/><rect x="-8.3" y="-8.3" width="16.6" height="16.6" transform="translate(383.6,804.3) rotate(-34)"/><rect x="-8.3" y="-8.3" width="16.6" height="16.6" transform="translate(361.0,812.4) rotate(-34)"/><rect x="-8.3" y="-8.3" width="16.6" height="16.6" transform="translate(240.3,784.6) rotate(-34)"/><rect x="-8.3" y="-8.3" width="16.6" height="16.6" transform="translate(268.8,792.6) rotate(-34)"/><rect x="-8.3" y="-8.3" width="16.6" height="16.6" transform="translate(290.0,776.6) rotate(-34)"/><rect x="-8.3" y="-8.3" width="16.6" height="16.6" transform="translate(331.0,790.5) rotate(-34)"/><rect x="-8.3" y="-8.3" width="16.6" height="16.6" transform="translate(316.4,804.3) rotate(-34)"/><rect x="-8.3" y="-8.3" width="16.6" height="16.6" transform="translate(232.3,826.3) rotate(-34)"/><rect x="-8.3" y="-8.3" width="16.6" height="16.6" transform="translate(236.7,849.7) rotate(-34)"/><rect x="-8.3" y="-8.3" width="16.6" height="16.6" transform="translate(377.0,830.7) rotate(-34)"/><rect x="-8.3" y="-8.3" width="16.6" height="16.6" transform="translate(404.1,854.1) rotate(-34)"/><rect x="-8.3" y="-8.3" width="16.6" height="16.6" transform="translate(437.0,854.8) rotate(-34)"/><rect x="-8.3" y="-8.3" width="16.6" height="16.6" transform="translate(438.4,832.1) rotate(-34)"/><rect x="-8.3" y="-8.3" width="16.6" height="16.6" transform="translate(458.9,832.1) rotate(-34)"/><rect x="-8.3" y="-8.3" width="16.6" height="16.6" transform="translate(478.7,737.8) rotate(-34)"/><rect x="-8.3" y="-8.3" width="16.6" height="16.6" transform="translate(517.4,741.5) rotate(-34)"/><rect x="-8.3" y="-8.3" width="16.6" height="16.6" transform="translate(528.4,750.2) rotate(-34)"/><rect x="-8.3" y="-8.3" width="16.6" height="16.6" transform="translate(557.6,729.8) rotate(-34)"/><rect x="-8.3" y="-8.3" width="16.6" height="16.6" transform="translate(568.6,761.2) rotate(-34)"/><rect x="-8.3" y="-8.3" width="16.6" height="16.6" transform="translate(607.3,759.7) rotate(-34)"/><rect x="-8.3" y="-8.3" width="16.6" height="16.6" transform="translate(605.1,778.8) rotate(-34)"/><rect x="-8.3" y="-8.3" width="16.6" height="16.6" transform="translate(625.6,766.3) rotate(-34)"/><rect x="-8.3" y="-8.3" width="16.6" height="16.6" transform="translate(627.1,792.6) rotate(-34)"/><rect x="-8.3" y="-8.3" width="16.6" height="16.6" transform="translate(579.5,792.6) rotate(-34)"/><rect x="-8.3" y="-8.3" width="16.6" height="16.6" transform="translate(563.5,826.3) rotate(-34)"/><rect x="-8.3" y="-8.3" width="16.6" height="16.6" transform="translate(492.5,842.4) rotate(-34)"/><rect x="-8.3" y="-8.3" width="16.6" height="16.6" transform="translate(617.6,817.5) rotate(-34)"/><rect x="-8.3" y="-8.3" width="16.6" height="16.6" transform="translate(602.2,854.8) rotate(-34)"/><rect x="-8.3" y="-8.3" width="16.6" height="16.6" transform="translate(635.8,725.4) rotate(-34)"/><rect x="-8.3" y="-8.3" width="16.6" height="16.6" transform="translate(650.5,729.8) rotate(-34)"/><rect x="-8.3" y="-8.3" width="16.6" height="16.6" transform="translate(650.5,742.9) rotate(-34)"/><rect x="-8.3" y="-8.3" width="16.6" height="16.6" transform="translate(669.5,722.5) rotate(-34)"/><rect x="-8.3" y="-8.3" width="16.6" height="16.6" transform="translate(724.3,726.8) rotate(-34)"/><rect x="-8.3" y="-8.3" width="16.6" height="16.6" transform="translate(682.6,742.9) rotate(-34)"/><rect x="-8.3" y="-8.3" width="16.6" height="16.6" transform="translate(684.1,761.9) rotate(-34)"/><rect x="-8.3" y="-8.3" width="16.6" height="16.6" transform="translate(654.1,818.2) rotate(-34)"/><rect x="-8.3" y="-8.3" width="16.6" height="16.6" transform="translate(687.0,810.2) rotate(-34)"/><rect x="-8.3" y="-8.3" width="16.6" height="16.6" transform="translate(744.0,775.8) rotate(-34)"/><rect x="-8.3" y="-8.3" width="16.6" height="16.6" transform="translate(752.8,767.8) rotate(-34)"/><rect x="-8.3" y="-8.3" width="16.6" height="16.6" transform="translate(732.3,783.9) rotate(-34)"/><rect x="-8.3" y="-8.3" width="16.6" height="16.6" transform="translate(745.5,792.6) rotate(-34)"/><rect x="-8.3" y="-8.3" width="16.6" height="16.6" transform="translate(729.4,827.0) rotate(-34)"/><rect x="-8.3" y="-8.3" width="16.6" height="16.6" transform="translate(679.0,856.2) rotate(-34)"/><rect x="-8.3" y="-8.3" width="16.6" height="16.6" transform="translate(815.7,734.2) rotate(-34)"/><rect x="-8.3" y="-8.3" width="16.6" height="16.6" transform="translate(829.6,743.7) rotate(-34)"/><rect x="-8.3" y="-8.3" width="16.6" height="16.6" transform="translate(756.5,749.5) rotate(-34)"/><rect x="-8.3" y="-8.3" width="16.6" height="16.6" transform="translate(809.8,771.4) rotate(-34)"/><rect x="-8.3" y="-8.3" width="16.6" height="16.6" transform="translate(814.2,783.1) rotate(-34)"/><rect x="-8.3" y="-8.3" width="16.6" height="16.6" transform="translate(844.2,756.8) rotate(-34)"/><rect x="-8.3" y="-8.3" width="16.6" height="16.6" transform="translate(876.4,742.2) rotate(-34)"/><rect x="-8.3" y="-8.3" width="16.6" height="16.6" transform="translate(867.6,778.8) rotate(-34)"/><rect x="-8.3" y="-8.3" width="16.6" height="16.6" transform="translate(904.9,804.3) rotate(-34)"/><rect x="-8.3" y="-8.3" width="16.6" height="16.6" transform="translate(854.4,819.7) rotate(-34)"/><rect x="-8.3" y="-8.3" width="16.6" height="16.6" transform="translate(768.9,842.4) rotate(-34)"/><rect x="-8.3" y="-8.3" width="16.6" height="16.6" transform="translate(910.7,774.4) rotate(-34)"/><rect x="-8.3" y="-8.3" width="16.6" height="16.6" transform="translate(925.3,722.5) rotate(-34)"/><rect x="-8.3" y="-8.3" width="16.6" height="16.6" transform="translate(986.0,732.7) rotate(-34)"/><rect x="-8.3" y="-8.3" width="16.6" height="16.6" transform="translate(1031.3,726.8) rotate(-34)"/><rect x="-8.3" y="-8.3" width="16.6" height="16.6" transform="translate(983.8,764.1) rotate(-34)"/><rect x="-8.3" y="-8.3" width="16.6" height="16.6" transform="translate(1013.8,784.6) rotate(-34)"/><rect x="-8.3" y="-8.3" width="16.6" height="16.6" transform="translate(937.8,838.0) rotate(-34)"/><rect x="-8.3" y="-8.3" width="16.6" height="16.6" transform="translate(977.2,855.5) rotate(-34)"/><rect x="-8.3" y="-8.3" width="16.6" height="16.6" transform="translate(925.3,857.0) rotate(-34)"/><rect x="-8.3" y="-8.3" width="16.6" height="16.6" transform="translate(923.1,859.9) rotate(-34)"/><rect x="-8.3" y="-8.3" width="16.6" height="16.6" transform="translate(1036.5,725.4) rotate(-34)"/><rect x="-8.3" y="-8.3" width="16.6" height="16.6" transform="translate(1084.7,741.5) rotate(-34)"/><rect x="-8.3" y="-8.3" width="16.6" height="16.6" transform="translate(1115.4,740.0) rotate(-34)"/><rect x="-8.3" y="-8.3" width="16.6" height="16.6" transform="translate(1114.0,757.6) rotate(-34)"/><rect x="-8.3" y="-8.3" width="16.6" height="16.6" transform="translate(1193.6,753.2) rotate(-34)"/><rect x="-8.3" y="-8.3" width="16.6" height="16.6" transform="translate(1220.0,771.4) rotate(-34)"/><rect x="-8.3" y="-8.3" width="16.6" height="16.6" transform="translate(1055.5,784.6) rotate(-34)"/><rect x="-8.3" y="-8.3" width="16.6" height="16.6" transform="translate(1096.4,779.5) rotate(-34)"/><rect x="-8.3" y="-8.3" width="16.6" height="16.6" transform="translate(1107.4,808.7) rotate(-34)"/><rect x="-8.3" y="-8.3" width="16.6" height="16.6" transform="translate(1179.0,802.9) rotate(-34)"/><rect x="-8.3" y="-8.3" width="16.6" height="16.6" transform="translate(1207.5,814.6) rotate(-34)"/><rect x="-8.3" y="-8.3" width="16.6" height="16.6" transform="translate(1252.9,832.9) rotate(-34)"/><rect x="-8.3" y="-8.3" width="16.6" height="16.6" transform="translate(1212.7,855.5) rotate(-34)"/><rect x="-8.3" y="-8.3" width="16.6" height="16.6" transform="translate(1149.8,824.1) rotate(-34)"/><rect x="-8.3" y="-8.3" width="16.6" height="16.6" transform="translate(1109.6,833.6) rotate(-34)"/><rect x="-8.3" y="-8.3" width="16.6" height="16.6" transform="translate(1127.8,852.6) rotate(-34)"/></g><g fill="#8b5cf6"><rect x="-8.3" y="-8.3" width="16.6" height="16.6" transform="translate(609.8,307.8) rotate(-34)"/><rect x="-8.3" y="-8.3" width="16.6" height="16.6" transform="translate(590.8,416.8) rotate(-34)"/><rect x="-8.3" y="-8.3" width="16.6" height="16.6" transform="translate(237.8,442.8) rotate(-34)"/><rect x="-8.3" y="-8.3" width="16.6" height="16.6" transform="translate(594.8,558.8) rotate(-34)"/><rect x="-8.3" y="-8.3" width="16.6" height="16.6" transform="translate(243.3,637.9) rotate(-34)"/><rect x="-8.3" y="-8.3" width="16.6" height="16.6" transform="translate(252.0,651.8) rotate(-34)"/><rect x="-8.3" y="-8.3" width="16.6" height="16.6" transform="translate(238.1,662.0) rotate(-34)"/><rect x="-8.3" y="-8.3" width="16.6" height="16.6" transform="translate(214.7,705.9) rotate(-34)"/><rect x="-8.3" y="-8.3" width="16.6" height="16.6" transform="translate(235.2,713.2) rotate(-34)"/><rect x="-8.3" y="-8.3" width="16.6" height="16.6" transform="translate(284.9,611.6) rotate(-34)"/><rect x="-8.3" y="-8.3" width="16.6" height="16.6" transform="translate(271.0,700.7) rotate(-34)"/><rect x="-8.3" y="-8.3" width="16.6" height="16.6" transform="translate(349.3,634.9) rotate(-34)"/><rect x="-8.3" y="-8.3" width="16.6" height="16.6" transform="translate(377.0,604.2) rotate(-34)"/><rect x="-8.3" y="-8.3" width="16.6" height="16.6" transform="translate(402.6,634.9) rotate(-34)"/><rect x="-8.3" y="-8.3" width="16.6" height="16.6" transform="translate(422.4,595.5) rotate(-34)"/><rect x="-8.3" y="-8.3" width="16.6" height="16.6" transform="translate(455.3,628.4) rotate(-34)"/><rect x="-8.3" y="-8.3" width="16.6" height="16.6" transform="translate(445.8,659.1) rotate(-34)"/><rect x="-8.3" y="-8.3" width="16.6" height="16.6" transform="translate(464.0,654.0) rotate(-34)"/><rect x="-8.3" y="-8.3" width="16.6" height="16.6" transform="translate(472.8,662.7) rotate(-34)"/><rect x="-8.3" y="-8.3" width="16.6" height="16.6" transform="translate(409.2,686.1) rotate(-34)"/><rect x="-8.3" y="-8.3" width="16.6" height="16.6" transform="translate(442.8,686.9) rotate(-34)"/><rect x="-8.3" y="-8.3" width="16.6" height="16.6" transform="translate(431.1,699.3) rotate(-34)"/><rect x="-8.3" y="-8.3" width="16.6" height="16.6" transform="translate(424.6,709.5) rotate(-34)"/><rect x="-8.3" y="-8.3" width="16.6" height="16.6" transform="translate(444.3,706.6) rotate(-34)"/><rect x="-8.3" y="-8.3" width="16.6" height="16.6" transform="translate(462.6,709.5) rotate(-34)"/><rect x="-8.3" y="-8.3" width="16.6" height="16.6" transform="translate(488.2,605.7) rotate(-34)"/><rect x="-8.3" y="-8.3" width="16.6" height="16.6" transform="translate(511.6,616.7) rotate(-34)"/><rect x="-8.3" y="-8.3" width="16.6" height="16.6" transform="translate(496.2,624.7) rotate(-34)"/><rect x="-8.3" y="-8.3" width="16.6" height="16.6" transform="translate(483.8,636.4) rotate(-34)"/><rect x="-8.3" y="-8.3" width="16.6" height="16.6" transform="translate(534.9,614.5) rotate(-34)"/><rect x="-8.3" y="-8.3" width="16.6" height="16.6" transform="translate(559.8,600.6) rotate(-34)"/><rect x="-8.3" y="-8.3" width="16.6" height="16.6" transform="translate(581.0,621.1) rotate(-34)"/><rect x="-8.3" y="-8.3" width="16.6" height="16.6" transform="translate(555.4,637.9) rotate(-34)"/><rect x="-8.3" y="-8.3" width="16.6" height="16.6" transform="translate(530.6,638.6) rotate(-34)"/><rect x="-8.3" y="-8.3" width="16.6" height="16.6" transform="translate(646.8,599.9) rotate(-34)"/><rect x="-8.3" y="-8.3" width="16.6" height="16.6" transform="translate(703.1,614.5) rotate(-34)"/><rect x="-8.3" y="-8.3" width="16.6" height="16.6" transform="translate(739.6,621.8) rotate(-34)"/><rect x="-8.3" y="-8.3" width="16.6" height="16.6" transform="translate(706.0,634.2) rotate(-34)"/><rect x="-8.3" y="-8.3" width="16.6" height="16.6" transform="translate(695.8,636.4) rotate(-34)"/><rect x="-8.3" y="-8.3" width="16.6" height="16.6" transform="translate(624.1,645.2) rotate(-34)"/><rect x="-8.3" y="-8.3" width="16.6" height="16.6" transform="translate(634.4,648.8) rotate(-34)"/><rect x="-8.3" y="-8.3" width="16.6" height="16.6" transform="translate(505.0,662.7) rotate(-34)"/><rect x="-8.3" y="-8.3" width="16.6" height="16.6" transform="translate(510.8,670.0) rotate(-34)"/><rect x="-8.3" y="-8.3" width="16.6" height="16.6" transform="translate(525.4,668.6) rotate(-34)"/><rect x="-8.3" y="-8.3" width="16.6" height="16.6" transform="translate(570.0,675.9) rotate(-34)"/><rect x="-8.3" y="-8.3" width="16.6" height="16.6" transform="translate(583.9,671.5) rotate(-34)"/><rect x="-8.3" y="-8.3" width="16.6" height="16.6" transform="translate(558.3,692.0) rotate(-34)"/><rect x="-8.3" y="-8.3" width="16.6" height="16.6" transform="translate(480.8,711.0) rotate(-34)"/><rect x="-8.3" y="-8.3" width="16.6" height="16.6" transform="translate(611.7,683.2) rotate(-34)"/><rect x="-8.3" y="-8.3" width="16.6" height="16.6" transform="translate(637.3,682.5) rotate(-34)"/><rect x="-8.3" y="-8.3" width="16.6" height="16.6" transform="translate(651.2,680.3) rotate(-34)"/><rect x="-8.3" y="-8.3" width="16.6" height="16.6" transform="translate(665.1,676.6) rotate(-34)"/><rect x="-8.3" y="-8.3" width="16.6" height="16.6" transform="translate(711.1,678.8) rotate(-34)"/><rect x="-8.3" y="-8.3" width="16.6" height="16.6" transform="translate(746.2,677.3) rotate(-34)"/><rect x="-8.3" y="-8.3" width="16.6" height="16.6" transform="translate(736.7,690.5) rotate(-34)"/><rect x="-8.3" y="-8.3" width="16.6" height="16.6" transform="translate(635.1,704.4) rotate(-34)"/><rect x="-8.3" y="-8.3" width="16.6" height="16.6" transform="translate(723.6,708.8) rotate(-34)"/><rect x="-8.3" y="-8.3" width="16.6" height="16.6" transform="translate(736.0,705.1) rotate(-34)"/><rect x="-8.3" y="-8.3" width="16.6" height="16.6" transform="translate(761.6,637.1) rotate(-34)"/><rect x="-8.3" y="-8.3" width="16.6" height="16.6" transform="translate(831.0,605.0) rotate(-34)"/><rect x="-8.3" y="-8.3" width="16.6" height="16.6" transform="translate(809.8,629.1) rotate(-34)"/><rect x="-8.3" y="-8.3" width="16.6" height="16.6" transform="translate(851.5,646.6) rotate(-34)"/><rect x="-8.3" y="-8.3" width="16.6" height="16.6" transform="translate(843.5,657.6) rotate(-34)"/><rect x="-8.3" y="-8.3" width="16.6" height="16.6" transform="translate(848.6,672.2) rotate(-34)"/><rect x="-8.3" y="-8.3" width="16.6" height="16.6" transform="translate(803.3,668.6) rotate(-34)"/><rect x="-8.3" y="-8.3" width="16.6" height="16.6" transform="translate(873.4,692.0) rotate(-34)"/><rect x="-8.3" y="-8.3" width="16.6" height="16.6" transform="translate(895.4,621.8) rotate(-34)"/><rect x="-8.3" y="-8.3" width="16.6" height="16.6" transform="translate(961.2,645.2) rotate(-34)"/><rect x="-8.3" y="-8.3" width="16.6" height="16.6" transform="translate(973.6,638.6) rotate(-34)"/><rect x="-8.3" y="-8.3" width="16.6" height="16.6" transform="translate(1005.0,598.4) rotate(-34)"/><rect x="-8.3" y="-8.3" width="16.6" height="16.6" transform="translate(1001.4,616.7) rotate(-34)"/><rect x="-8.3" y="-8.3" width="16.6" height="16.6" transform="translate(1026.2,652.5) rotate(-34)"/><rect x="-8.3" y="-8.3" width="16.6" height="16.6" transform="translate(1027.0,666.4) rotate(-34)"/><rect x="-8.3" y="-8.3" width="16.6" height="16.6" transform="translate(932.7,683.9) rotate(-34)"/><rect x="-8.3" y="-8.3" width="16.6" height="16.6" transform="translate(957.5,686.1) rotate(-34)"/><rect x="-8.3" y="-8.3" width="16.6" height="16.6" transform="translate(987.5,692.0) rotate(-34)"/><rect x="-8.3" y="-8.3" width="16.6" height="16.6" transform="translate(1029.9,703.7) rotate(-34)"/><rect x="-8.3" y="-8.3" width="16.6" height="16.6" transform="translate(1016.7,717.6) rotate(-34)"/><rect x="-8.3" y="-8.3" width="16.6" height="16.6" transform="translate(1087.6,610.8) rotate(-34)"/><rect x="-8.3" y="-8.3" width="16.6" height="16.6" transform="translate(1104.5,620.3) rotate(-34)"/><rect x="-8.3" y="-8.3" width="16.6" height="16.6" transform="translate(1135.2,621.1) rotate(-34)"/><rect x="-8.3" y="-8.3" width="16.6" height="16.6" transform="translate(1169.5,654.7) rotate(-34)"/><rect x="-8.3" y="-8.3" width="16.6" height="16.6" transform="translate(1209.0,670.8) rotate(-34)"/><rect x="-8.3" y="-8.3" width="16.6" height="16.6" transform="translate(1251.4,669.3) rotate(-34)"/><rect x="-8.3" y="-8.3" width="16.6" height="16.6" transform="translate(1246.3,687.6) rotate(-34)"/><rect x="-8.3" y="-8.3" width="16.6" height="16.6" transform="translate(1081.1,647.4) rotate(-34)"/><rect x="-8.3" y="-8.3" width="16.6" height="16.6" transform="translate(1051.1,659.8) rotate(-34)"/><rect x="-8.3" y="-8.3" width="16.6" height="16.6" transform="translate(1048.2,677.3) rotate(-34)"/><rect x="-8.3" y="-8.3" width="16.6" height="16.6" transform="translate(1067.9,673.0) rotate(-34)"/><rect x="-8.3" y="-8.3" width="16.6" height="16.6" transform="translate(1075.9,697.1) rotate(-34)"/><rect x="-8.3" y="-8.3" width="16.6" height="16.6" transform="translate(1053.3,700.7) rotate(-34)"/><rect x="-8.3" y="-8.3" width="16.6" height="16.6" transform="translate(1148.3,693.4) rotate(-34)"/><rect x="-8.3" y="-8.3" width="16.6" height="16.6" transform="translate(1143.2,705.9) rotate(-34)"/><rect x="-8.3" y="-8.3" width="16.6" height="16.6" transform="translate(1183.4,694.2) rotate(-34)"/><rect x="-8.3" y="-8.3" width="16.6" height="16.6" transform="translate(325.9,752.4) rotate(-34)"/><rect x="-8.3" y="-8.3" width="16.6" height="16.6" transform="translate(438.4,755.4) rotate(-34)"/><rect x="-8.3" y="-8.3" width="16.6" height="16.6" transform="translate(363.1,740.7) rotate(-34)"/><rect x="-8.3" y="-8.3" width="16.6" height="16.6" transform="translate(377.8,753.2) rotate(-34)"/><rect x="-8.3" y="-8.3" width="16.6" height="16.6" transform="translate(400.4,763.4) rotate(-34)"/><rect x="-8.3" y="-8.3" width="16.6" height="16.6" transform="translate(380.0,780.9) rotate(-34)"/><rect x="-8.3" y="-8.3" width="16.6" height="16.6" transform="translate(415.1,797.0) rotate(-34)"/><rect x="-8.3" y="-8.3" width="16.6" height="16.6" transform="translate(355.1,802.1) rotate(-34)"/><rect x="-8.3" y="-8.3" width="16.6" height="16.6" transform="translate(241.8,799.2) rotate(-34)"/><rect x="-8.3" y="-8.3" width="16.6" height="16.6" transform="translate(256.4,792.6) rotate(-34)"/><rect x="-8.3" y="-8.3" width="16.6" height="16.6" transform="translate(262.3,802.9) rotate(-34)"/><rect x="-8.3" y="-8.3" width="16.6" height="16.6" transform="translate(329.5,780.2) rotate(-34)"/><rect x="-8.3" y="-8.3" width="16.6" height="16.6" transform="translate(288.6,808.0) rotate(-34)"/><rect x="-8.3" y="-8.3" width="16.6" height="16.6" transform="translate(266.6,855.5) rotate(-34)"/><rect x="-8.3" y="-8.3" width="16.6" height="16.6" transform="translate(344.1,837.2) rotate(-34)"/><rect x="-8.3" y="-8.3" width="16.6" height="16.6" transform="translate(392.4,849.7) rotate(-34)"/><rect x="-8.3" y="-8.3" width="16.6" height="16.6" transform="translate(418.7,839.4) rotate(-34)"/><rect x="-8.3" y="-8.3" width="16.6" height="16.6" transform="translate(420.9,851.9) rotate(-34)"/><rect x="-8.3" y="-8.3" width="16.6" height="16.6" transform="translate(469.9,827.0) rotate(-34)"/><rect x="-8.3" y="-8.3" width="16.6" height="16.6" transform="translate(476.5,823.3) rotate(-34)"/><rect x="-8.3" y="-8.3" width="16.6" height="16.6" transform="translate(575.2,744.4) rotate(-34)"/><rect x="-8.3" y="-8.3" width="16.6" height="16.6" transform="translate(540.8,770.0) rotate(-34)"/><rect x="-8.3" y="-8.3" width="16.6" height="16.6" transform="translate(539.3,800.0) rotate(-34)"/><rect x="-8.3" y="-8.3" width="16.6" height="16.6" transform="translate(532.0,825.5) rotate(-34)"/><rect x="-8.3" y="-8.3" width="16.6" height="16.6" transform="translate(573.7,845.3) rotate(-34)"/><rect x="-8.3" y="-8.3" width="16.6" height="16.6" transform="translate(549.6,848.9) rotate(-34)"/><rect x="-8.3" y="-8.3" width="16.6" height="16.6" transform="translate(537.9,851.1) rotate(-34)"/><rect x="-8.3" y="-8.3" width="16.6" height="16.6" transform="translate(568.6,857.7) rotate(-34)"/><rect x="-8.3" y="-8.3" width="16.6" height="16.6" transform="translate(606.6,834.3) rotate(-34)"/><rect x="-8.3" y="-8.3" width="16.6" height="16.6" transform="translate(631.4,852.6) rotate(-34)"/><rect x="-8.3" y="-8.3" width="16.6" height="16.6" transform="translate(636.6,743.7) rotate(-34)"/><rect x="-8.3" y="-8.3" width="16.6" height="16.6" transform="translate(687.7,730.5) rotate(-34)"/><rect x="-8.3" y="-8.3" width="16.6" height="16.6" transform="translate(703.8,734.9) rotate(-34)"/><rect x="-8.3" y="-8.3" width="16.6" height="16.6" transform="translate(706.0,743.7) rotate(-34)"/><rect x="-8.3" y="-8.3" width="16.6" height="16.6" transform="translate(732.3,737.8) rotate(-34)"/><rect x="-8.3" y="-8.3" width="16.6" height="16.6" transform="translate(672.4,749.5) rotate(-34)"/><rect x="-8.3" y="-8.3" width="16.6" height="16.6" transform="translate(661.4,797.0) rotate(-34)"/><rect x="-8.3" y="-8.3" width="16.6" height="16.6" transform="translate(666.5,808.0) rotate(-34)"/><rect x="-8.3" y="-8.3" width="16.6" height="16.6" transform="translate(722.1,806.5) rotate(-34)"/><rect x="-8.3" y="-8.3" width="16.6" height="16.6" transform="translate(737.5,809.5) rotate(-34)"/><rect x="-8.3" y="-8.3" width="16.6" height="16.6" transform="translate(709.7,829.9) rotate(-34)"/><rect x="-8.3" y="-8.3" width="16.6" height="16.6" transform="translate(677.5,839.4) rotate(-34)"/><rect x="-8.3" y="-8.3" width="16.6" height="16.6" transform="translate(665.1,844.6) rotate(-34)"/><rect x="-8.3" y="-8.3" width="16.6" height="16.6" transform="translate(749.9,829.2) rotate(-34)"/><rect x="-8.3" y="-8.3" width="16.6" height="16.6" transform="translate(788.6,737.1) rotate(-34)"/><rect x="-8.3" y="-8.3" width="16.6" height="16.6" transform="translate(774.7,756.1) rotate(-34)"/><rect x="-8.3" y="-8.3" width="16.6" height="16.6" transform="translate(784.2,802.9) rotate(-34)"/><rect x="-8.3" y="-8.3" width="16.6" height="16.6" transform="translate(842.0,773.6) rotate(-34)"/><rect x="-8.3" y="-8.3" width="16.6" height="16.6" transform="translate(781.3,829.2) rotate(-34)"/><rect x="-8.3" y="-8.3" width="16.6" height="16.6" transform="translate(766.0,825.5) rotate(-34)"/><rect x="-8.3" y="-8.3" width="16.6" height="16.6" transform="translate(763.8,814.6) rotate(-34)"/><rect x="-8.3" y="-8.3" width="16.6" height="16.6" transform="translate(817.1,853.3) rotate(-34)"/><rect x="-8.3" y="-8.3" width="16.6" height="16.6" transform="translate(891.7,827.7) rotate(-34)"/><rect x="-8.3" y="-8.3" width="16.6" height="16.6" transform="translate(953.1,728.3) rotate(-34)"/><rect x="-8.3" y="-8.3" width="16.6" height="16.6" transform="translate(1018.2,722.5) rotate(-34)"/><rect x="-8.3" y="-8.3" width="16.6" height="16.6" transform="translate(1000.6,807.3) rotate(-34)"/><rect x="-8.3" y="-8.3" width="16.6" height="16.6" transform="translate(972.1,804.3) rotate(-34)"/><rect x="-8.3" y="-8.3" width="16.6" height="16.6" transform="translate(996.3,825.5) rotate(-34)"/><rect x="-8.3" y="-8.3" width="16.6" height="16.6" transform="translate(1031.3,848.2) rotate(-34)"/><rect x="-8.3" y="-8.3" width="16.6" height="16.6" transform="translate(940.7,851.1) rotate(-34)"/><rect x="-8.3" y="-8.3" width="16.6" height="16.6" transform="translate(961.2,854.8) rotate(-34)"/><rect x="-8.3" y="-8.3" width="16.6" height="16.6" transform="translate(1062.0,732.7) rotate(-34)"/><rect x="-8.3" y="-8.3" width="16.6" height="16.6" transform="translate(1093.5,732.0) rotate(-34)"/><rect x="-8.3" y="-8.3" width="16.6" height="16.6" transform="translate(1101.5,745.1) rotate(-34)"/><rect x="-8.3" y="-8.3" width="16.6" height="16.6" transform="translate(1126.4,730.5) rotate(-34)"/><rect x="-8.3" y="-8.3" width="16.6" height="16.6" transform="translate(1156.4,740.0) rotate(-34)"/><rect x="-8.3" y="-8.3" width="16.6" height="16.6" transform="translate(1209.7,758.3) rotate(-34)"/><rect x="-8.3" y="-8.3" width="16.6" height="16.6" transform="translate(1228.0,764.1) rotate(-34)"/><rect x="-8.3" y="-8.3" width="16.6" height="16.6" transform="translate(1214.8,787.5) rotate(-34)"/><rect x="-8.3" y="-8.3" width="16.6" height="16.6" transform="translate(1043.8,751.0) rotate(-34)"/><rect x="-8.3" y="-8.3" width="16.6" height="16.6" transform="translate(1063.5,770.7) rotate(-34)"/><rect x="-8.3" y="-8.3" width="16.6" height="16.6" transform="translate(1118.3,780.9) rotate(-34)"/><rect x="-8.3" y="-8.3" width="16.6" height="16.6" transform="translate(1092.0,801.4) rotate(-34)"/><rect x="-8.3" y="-8.3" width="16.6" height="16.6" transform="translate(1124.2,802.9) rotate(-34)"/><rect x="-8.3" y="-8.3" width="16.6" height="16.6" transform="translate(1184.1,812.4) rotate(-34)"/><rect x="-8.3" y="-8.3" width="16.6" height="16.6" transform="translate(1221.4,837.2) rotate(-34)"/><rect x="-8.3" y="-8.3" width="16.6" height="16.6" transform="translate(1155.6,853.3) rotate(-34)"/><rect x="-8.3" y="-8.3" width="16.6" height="16.6" transform="translate(1065.0,819.7) rotate(-34)"/><rect x="-8.3" y="-8.3" width="16.6" height="16.6" transform="translate(1051.8,829.9) rotate(-34)"/><rect x="-8.3" y="-8.3" width="16.6" height="16.6" transform="translate(1082.5,840.2) rotate(-34)"/></g></g>
<text x="94" y="169" font-size="16.800" font-weight="bold" fill="#222">Count of Amount and Count of Amount by Date and Status</text>
<text x="107" y="209.400" font-size="13.500" font-weight="bold" letter-spacing="-0.33" fill="#2a2a2a">Status</text>
<g font-size="13.200" fill="#333">
<circle cx="163.500" cy="205.500" r="2.700" fill="#3b82f6"/><text x="174" y="210">Rejected</text>
<circle cx="243" cy="205.500" r="2.700" fill="#22c55e"/><text x="253" y="210">Open</text>
<circle cx="301" cy="205.500" r="2.700" fill="#f59e0b"/><text x="311" y="210">Approved</text>
<circle cx="384" cy="205.500" r="2.700" fill="#ef4444"/><text x="394" y="210">Pending</text>
<circle cx="459.500" cy="205.500" r="2.700" fill="#8b5cf6"/><text x="469.500" y="210">Closed</text>
</g>
<text transform="translate(137.800,554.3) rotate(-90)" text-anchor="middle" font-size="14.6" font-weight="bold" fill="#222">Count of Amount</text>
<text x="733" y="944" text-anchor="middle" font-size="14.6" font-weight="bold" fill="#222">Date</text>
<rect x="209" y="931" width="1050" height="10" fill="#808080"/>
<!-- visual header icons -->
<g fill="none" stroke="#111" stroke-width="1.500" stroke-linejoin="round" stroke-linecap="round">
<path d="M1228.200 157.900H1240.300L1235.700 163.800V169.300L1232.900 168.200V163.800Z"/>
<path d="M1259.400 158.300H1263.700V162.800M1263.700 158.300L1259.300 163.200M1256.700 169.700H1252.400V165.400M1252.400 169.700L1257 165.300"/>
</g>
<g fill="#111"><circle cx="1283.200" cy="159.900" r="1.350"/><circle cx="1283.200" cy="164.300" r="1.350"/><circle cx="1283.200" cy="168.700" r="1.350"/></g>
</g>
</svg>

<!-- canvas scrollbars -->
<svg style="left:1311px;top:105px" width="15" height="841"><path d="M2.300 12L6.6 6L11 12Z M2 829L6.6 835.5L11.300 829Z" fill="#baa9a8"/><rect x="2.3" y="18" width="8.7" height="757" rx="4.3" fill="#baa9a8"/></svg>
<svg style="left:64px;top:946px" width="1262" height="15"><path d="M12 3L6 7.500L12 12Z M1234 3L1240 7.500L1234 12Z" fill="#baa9a8"/><rect x="18" y="3" width="1088" height="9" rx="4.500" fill="#baa9a8"/></svg>
<div class="hl" style="left:64px;top:961px;width:1262px"></div>
<!-- page tabs -->
<div class="a" style="left:73px;top:962px;width:75px;height:37px;background:#2d2d2d;border-bottom:3px solid #4fc3f7"></div>
<div class="t b" style="left:89.5px;top:972.8px;font-size:13.5px;letter-spacing:-0.52px">Page 1</div>
<svg style="left:161px;top:972px" width="18" height="18"><path d="M9 2V16M2 9H16" stroke="#4fc3f7" stroke-width="1.700" fill="none"/></svg>

<!-- ============ filters strip ============ -->
<div class="vl" style="left:1325px;top:63px;height:936px;width:2px"></div>
<div class="vl" style="left:1377px;top:63px;height:936px;width:3px"></div>
<svg style="stroke-width:1.7;left:1344.7px;top:80.5px" width="16" height="16" class="ic"><path d="M3.500 4L7.500 8L3.500 12M8.500 4L12.500 8L8.500 12"/></svg>
<div class="t b" style="left:1352.5px;top:126px;font-size:14.3px;transform:translate(-50%,-50%) rotate(-90deg);letter-spacing:-0.27px">Filters</div>

<!-- ============ visualizations panel ============ -->
<div class="t b" style="left:1394.5px;top:82.6px;font-size:16.5px;letter-spacing:-0.07px">Visualizations</div>
<svg style="stroke:#aaa;stroke-width:1.400;left:1608px;top:82px" width="16" height="16" class="ic"><path d="M6 3.500L10.500 8L6 12.500"/></svg>
<div class="hl" style="left:1380px;top:118px;width:263px"></div>
<div class="a" style="left:1393px;top:132px;width:238px;height:33px;border:1px solid #3a3a3a;border-radius:5px;overflow:hidden"><div class="a" style="left:118px;top:0;width:119px;height:31px;background:#2d2d2d"></div></div>
<svg style="stroke:#8b8f98;stroke-width:1.400;left:1443px;top:139px" width="18" height="18" class="ic"><path d="M2.500 2V15.500H16M6.500 12.500V8.500M10 12.500V4.500M13.500 12.500V10"/></svg>
<svg style="stroke:#4fc3f7;stroke-width:1.5;left:1560px;top:138px" width="20" height="20" class="ic"><path d="M3 16.300L13.800 5.500L16.300 8L5.500 18.800Z M12 7.300L14.500 9.800"/><path d="M6.500 3.500V6.500M5 5H8M15.800 11.800V15.200M14.100 13.500H17.500M10.500 2.800V3.200M17 3.500V3.900"/></svg>
<div class="hl" style="left:1380px;top:178px;width:263px"></div>
<div class="a" style="left:1380px;top:196px;width:131px;height:40px;background:#26292f;border-bottom:2px solid #4fc3f7;border-right:1px solid #3a3a3a"></div>
<div class="t b" style="left:1445px;top:215.500px;font-size:14px;color:#4fc3f7;transform:translate(-50%,-50%);letter-spacing:-0.43px">Visual</div>
<div class="t b" style="left:1577.500px;top:216px;font-size:14px;color:#8a8f98;transform:translate(-50%,-50%);letter-spacing:-0.25px">General</div>
<div class="hl" style="left:1511px;top:236px;width:132px"></div>
<div class="a" style="left:1397px;top:245px;width:229px;height:35px;background:#2d2d2d;border:1px solid #3a3a3a;border-radius:4px"></div>
<div class="t" style="left:1410px;top:258.2px;font-size:12.5px;color:#9a9ea6;letter-spacing:-0.20px">Search...</div>
<div class="hl" style="left:1380px;top:288px;width:263px"></div>
<div class="hl" style="left:1380px;top:304px;width:248px"></div>
<div class="hl" style="left:1380px;top:352px;width:248px"></div>
<div class="hl" style="left:1380px;top:400px;width:248px"></div>
<div class="hl" style="left:1380px;top:448px;width:248px"></div>
<div class="hl" style="left:1380px;top:495px;width:248px"></div>
<svg style="left:1380px;top:290px" width="263" height="615"><g class="ic" style="stroke:#c8c8c8;stroke-width:1.400;"><path d="M15.500 34.500L20 39L15.500 43.500M15.500 82.500L20 87L15.500 91.500M15.500 129.500L20 134L15.500 138.500M15.500 177.500L20 182L15.500 186.500M12.500 227.500L17 232L21.500 227.500"/></g>
<path d="M250.500 11.500L255 5.500L259.500 11.500Z M250.500 600.500L255 606.500L259.500 600.500Z" fill="#baa9a8"/><rect x="251" y="147" width="9" height="360" rx="4.500" fill="#baa9a8"/></svg>
<div class="t b" style="left:1413.500px;top:321.500px;font-size:14px;letter-spacing:-0.35px">Trend Line</div><div class="tog" style="left:1590px;top:320px"><i></i></div>
<div class="t b" style="left:1413.500px;top:369.500px;font-size:14px;letter-spacing:-0.43px">Ribbons</div><div class="tog on" style="left:1590px;top:368px"><i></i></div>
<div class="t b" style="left:1413.500px;top:416.500px;font-size:14px;letter-spacing:-0.76px">Lines</div>
<div class="t b" style="left:1413.500px;top:464.500px;font-size:14px;letter-spacing:-0.27px">Shade area</div><div class="tog" style="left:1590px;top:463px"><i></i></div>
<div class="t b" style="left:1413.500px;top:512.500px;font-size:14px;letter-spacing:-0.13px">Markers</div><div class="tog on" style="left:1590px;top:511px"><i></i></div>

<!-- card -->
<div class="a" style="left:1389px;top:543px;width:231px;height:328px;background:#252b36;border:1px solid #3a3f49;border-radius:6px"></div>
<div class="t b" style="left:1398px;top:556px;font-size:15px;letter-spacing:-0.49px">Apply settings to</div>
<div class="t" style="left:1398px;top:595.3px;font-size:12.5px;color:#b4b8bf;letter-spacing:-0.22px">Series</div>
<div class="sel" style="left:1497px;top:586px;width:113px;height:30px"></div>
<div class="t" style="left:1510.5px;top:594.5px;font-size:13.5px;letter-spacing:-0.04px">All</div>
<svg style="stroke:#f0f0f0;stroke-width:1.800;left:1589px;top:594px" width="16" height="14" class="ic"><path d="M2.500 4L8 9.500L13.500 4"/></svg>
<svg style="stroke:#c8c8c8;stroke-width:1.400;left:1407px;top:636px" width="14" height="14" class="ic"><path d="M2.500 4.500L7 9L11.500 4.500"/></svg>
<div class="t b" style="left:1431.500px;top:635.500px;font-size:14px;letter-spacing:-0.40px">Shape</div>
<div class="t" style="left:1406px;top:671.3px;font-size:12.5px;color:#b4b8bf;letter-spacing:-0.11px">Shape</div>
<div class="sel" style="left:1498px;top:662px;width:104px;height:30px"></div>
<div class="t" style="left:1510.5px;top:671.3px;font-size:13px;letter-spacing:-0.32px">Square</div>
<svg style="stroke:#f0f0f0;stroke-width:1.800;left:1581px;top:670px" width="16" height="14" class="ic"><path d="M2.500 4L8 9.500L13.500 4"/></svg>
<div class="t" style="left:1406px;top:709.3px;font-size:12.5px;color:#b4b8bf;letter-spacing:-0.48px">Size</div>
<div class="sel" style="left:1498px;top:700px;width:83px;height:30px"></div>
<div class="t b" style="left:1540px;top:709.3px;font-size:12.5px;letter-spacing:-0.55px">14</div>
<div class="vl" style="left:1561px;top:703px;height:24px;background:#3a3a3a"></div>
<svg style="left:1561px;top:701px" width="20" height="28"><path d="M5.5 13L10.7 5L16 13Z M5.5 17.8L10.7 26L16 17.8Z" fill="#a3a8b2"/><path d="M0.5 14.5H19" stroke="#3a3a3a" fill="none"/></svg>
<div class="t" style="left:1589.5px;top:710.5px;font-size:12px;color:#a0a4ac;letter-spacing:-0.19px">px</div>
<div class="t" style="left:1406px;top:748.7px;font-size:12.8px;color:#b4b8bf;letter-spacing:0.15px">Rotation</div>
<div class="sel" style="left:1498px;top:739px;width:91px;height:30px"></div>
<div class="t b" style="left:1548px;top:748.6px;font-size:12.5px;letter-spacing:-0.15px">34</div>
<div class="vl" style="left:1569px;top:742px;height:24px;background:#3a3a3a"></div>
<svg style="left:1569px;top:740px" width="20" height="28"><path d="M5.5 12L10.7 4L16 12Z M5.5 17L10.7 25L16 17Z" fill="#a3a8b2"/><path d="M0.5 14.5H19" stroke="#3a3a3a" fill="none"/></svg>
<div class="t" style="left:1597.500px;top:747px;font-size:12.500px;color:#a0a4ac">°</div>
<div class="hl" style="left:1398px;top:781px;width:212px;background:#3a3f49"></div>
<svg style="stroke:#c8c8c8;stroke-width:1.400;left:1407px;top:798px" width="14" height="14" class="ic"><path d="M4.500 2.500L9 7L4.500 11.500"/></svg>
<div class="t b" style="left:1431.500px;top:798.500px;font-size:14px;letter-spacing:-0.33px">Color</div>
<div class="hl" style="left:1398px;top:821px;width:212px;background:#3a3f49"></div>
<svg style="stroke:#c8c8c8;stroke-width:1.400;left:1407px;top:838px" width="14" height="14" class="ic"><path d="M4.500 2.500L9 7L4.500 11.500"/></svg>
<div class="t b" style="left:1431.500px;top:838px;font-size:14px;letter-spacing:-0.32px">Border</div><div class="tog on" style="left:1573px;top:836.500px"><i></i></div>
<div class="hl" style="left:1398px;top:860px;width:212px;background:#3a3f49"></div>
<svg style="stroke:#b4b8bf;stroke-width:1.300;left:1396px;top:881px" width="16" height="16" class="ic"><path d="M3 8A5 5 0 1 0 4.700 4.300L2.800 6"/><path d="M2.800 2.800V6H6"/></svg>
<div class="t" style="left:1419.500px;top:883px;font-size:12.8px;color:#b4b8bf;letter-spacing:0.08px">Reset to default</div>
<div class="hl" style="left:1380px;top:903px;width:263px"></div>
<div class="a" style="left:1397px;top:921px;width:229px;height:44px;border:1px solid #3a3a3a;border-radius:5px"></div>
<svg style="stroke:#b4b8bf;stroke-width:1.400;left:1447px;top:934px" width="18" height="18" class="ic"><path d="M3.500 9A5.500 5.500 0 1 0 5.300 4.900L3.200 6.800"/><path d="M3.200 3.300V6.800H6.700"/></svg>
<div class="t b" style="left:1472.500px;top:935.500px;font-size:14px;color:#a6aab2;letter-spacing:-0.13px">Reset to default</div>

<!-- ============ data panel ============ -->
<div class="a" style="left:1643px;top:63px;width:3px;height:936px;background:#3e3e3e"></div>
<div class="t b" style="left:1660.8px;top:82.6px;font-size:16.5px;letter-spacing:0.23px">Data</div>
<svg style="stroke:#aaa;stroke-width:1.400;left:1873px;top:82px" width="16" height="16" class="ic"><path d="M6 3.500L10.500 8L6 12.500"/></svg>
<div class="hl" style="left:1646px;top:118px;width:264px"></div>
<div class="a" style="left:1659px;top:132px;width:237px;height:34px;background:#2d2d2d;border:1px solid #3a3a3a;border-radius:4px"></div>
<svg style="stroke:#9a9ea6;stroke-width:1.300;left:1673px;top:141px" width="16" height="16" class="ic"><circle cx="7" cy="7" r="5"/><path d="M10.700 10.700L14 14"/></svg>
<div class="t" style="left:1703px;top:144.2px;font-size:12.5px;color:#9a9ea6;letter-spacing:-0.01px">Search columns...</div>
<div class="hl" style="left:1646px;top:179px;width:264px"></div>
<svg style="stroke:#b4b8bf;stroke-width:1.400;left:1659.5px;top:202px" width="14" height="14" class="ic"><path d="M2.500 4.500L7 9L11.500 4.500"/></svg>
<svg style="stroke:#38b6f1;stroke-width:1.5;left:1681px;top:197px" width="18" height="22" class="ic"><path d="M2.800 4.500A1.500 1.500 0 0 1 4.300 3H10.500L15.200 7.700V17.500A1.500 1.500 0 0 1 13.700 19H4.300A1.500 1.500 0 0 1 2.800 17.500Z"/><path d="M10.500 3V7.700H15.200M6 12H7.800M10 12H12M6 15.200H7.800M10 15.200H12"/></svg>
<div class="t b" style="left:1705px;top:202px;font-size:13px;color:#d0d3d8;letter-spacing:-0.13px">1. Input (DumboData....</div>
<div class="t" style="left:1855px;top:193.500px;font-size:12px;color:#8a8f98;letter-spacing:-0.38px">(10</div>
<div class="t" style="left:1855px;top:211.500px;font-size:12px;color:#8a8f98;letter-spacing:-0.33px">cols)</div>

<div class="row" style="top:280px"></div><div class="row" style="top:410px"></div><div class="row" style="top:496px"></div>
<div class="cb" style="left:1684px;top:251px"></div><div class="t" style="left:1735px;top:251.500px;font-size:13.2px;color:#c9ccd2;letter-spacing:-0.21px">RecordID</div>
<div class="cb on" style="left:1684px;top:294px"></div><div class="t b" style="left:1735px;top:294.500px;font-size:13.2px;color:#8ab4f8;letter-spacing:-0.27px">Date</div>
<div class="cb" style="left:1684px;top:338px"></div><div class="t" style="left:1735px;top:338.500px;font-size:13.2px;color:#c9ccd2;letter-spacing:0.12px">Category</div>
<div class="cb" style="left:1684px;top:381px"></div><div class="t" style="left:1735px;top:381.500px;font-size:13.2px;color:#c9ccd2;letter-spacing:0.11px">Subcategory</div>
<div class="cb on" style="left:1684px;top:424px"></div><div class="t b" style="left:1735px;top:424.500px;font-size:13.2px;color:#8ab4f8;letter-spacing:-0.22px">Amount</div>
<div class="cb" style="left:1684px;top:467px"></div><div class="t" style="left:1735px;top:467.500px;font-size:13.2px;color:#c9ccd2;letter-spacing:-0.08px">Currency</div>
<div class="cb on" style="left:1684px;top:510px"></div><div class="t b" style="left:1735px;top:510.500px;font-size:13.2px;color:#8ab4f8;letter-spacing:-0.60px">Status</div>
<div class="cb" style="left:1684px;top:554px"></div><div class="t" style="left:1735px;top:554.500px;font-size:13.2px;color:#c9ccd2;letter-spacing:0.09px">Owner</div>
<div class="a" style="left:1685px;top:596.500px;width:13px;height:1.500px;background:#cfcfcf"></div>
<svg style="left:1684px;top:294px" width="15" height="15" fill="none" stroke="#1b2129" stroke-width="1.800"><path d="M2.400 7.800L6 11.200L12.400 4.200"/></svg>
<svg style="left:1684px;top:424px" width="15" height="15" fill="none" stroke="#1b2129" stroke-width="1.800"><path d="M2.400 7.800L6 11.200L12.400 4.200"/></svg>
<svg style="left:1684px;top:510px" width="15" height="15" fill="none" stroke="#1b2129" stroke-width="1.800"><path d="M2.400 7.800L6 11.200L12.400 4.200"/></svg>
<svg style="left:1895px;top:238px" width="14" height="360"><path d="M2.500 11.500L7 5.500L11.500 11.500Z M2.500 346.500L7 352.500L11.500 346.500Z" fill="#baa9a8"/><rect x="2.500" y="16.500" width="9" height="270" rx="4.500" fill="#baa9a8"/></svg>
<div class="hl" style="left:1646px;top:605px;width:264px"></div>

</div></div>

</body></html>
